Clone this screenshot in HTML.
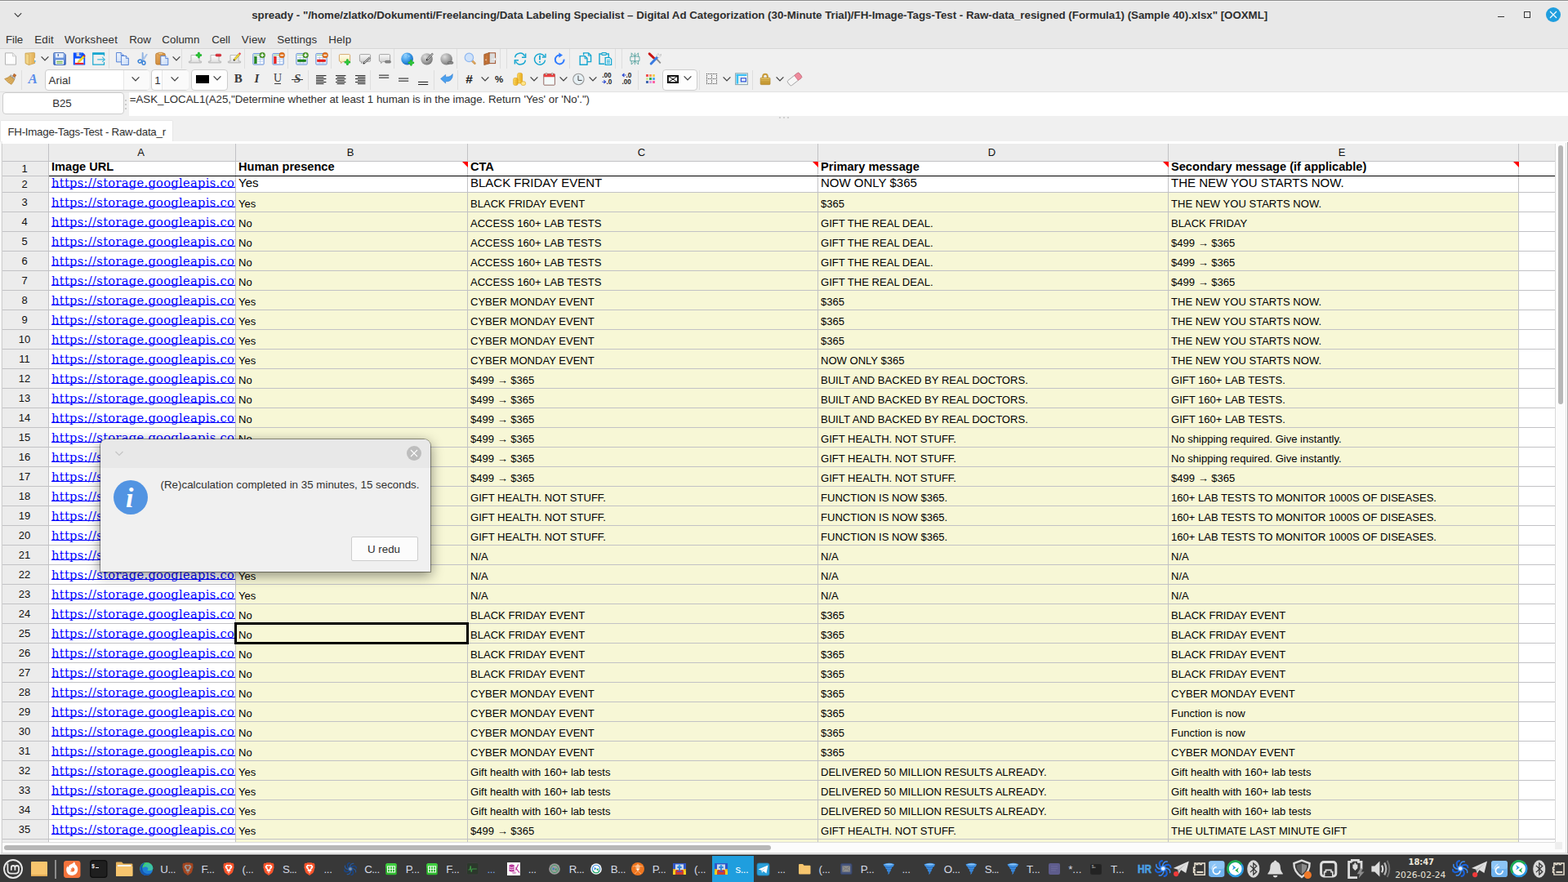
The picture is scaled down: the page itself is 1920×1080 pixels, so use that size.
<!DOCTYPE html>
<html><head><meta charset="utf-8"><title>spready</title>
<style>
html,body{margin:0;padding:0}
body{width:1920px;height:1080px;overflow:hidden;position:relative;background:#f0f0f0;font-family:'Liberation Sans',sans-serif}
div,span.t,svg{position:absolute}
span.t{white-space:pre;line-height:normal}
svg{overflow:visible}
span.l{position:absolute;left:63px;width:224.6px;overflow:hidden;white-space:pre;color:#0000ff;text-decoration:underline;font:14.67px 'DejaVu Serif','Liberation Serif',serif;letter-spacing:.3px;line-height:normal;text-decoration-thickness:1px;text-underline-offset:0px;text-decoration-skip-ink:none}
.dj{font-family:'DejaVu Sans','Liberation Sans',sans-serif !important}

</style></head><body>
<div style="left:0px;top:0px;width:1920px;height:60px;background:#e8e8e8;"></div>
<div style="left:0px;top:0px;width:1920px;height:1px;background:#8c8c8c;"></div>
<div style="left:0px;top:1px;width:1920px;height:1px;background:#f6f6f6;"></div>
<div style="left:0px;top:59px;width:1920px;height:1px;background:#d6d6d6;"></div>
<span class="t" style="left:308.2px;top:10.94px;font:700 13.33px 'Liberation Sans',sans-serif;color:#2f2f2f;letter-spacing:-0.027px;">spready - "/home/zlatko/Dokumenti/Freelancing/Data Labeling Specialist – Digital Ad Categorization (30-Minute Trial)/FH-Image-Tags-Test - Raw-data_resigned (Formula1) (Sample 40).xlsx" [OOXML]</span>
<svg style="left:10px;top:8px;" width="24" height="20" viewBox="0 0 24 20"><path d="M7.8 8.2 L12 12.4 L16.2 8.2" fill="none" stroke="#3c3c3c" stroke-width="1.15"/></svg>
<div style="left:1834px;top:20px;width:8px;height:1.3px;background:#333;"></div>
<div style="left:1866px;top:14px;width:8px;height:8px;box-sizing:border-box;border:1.2px solid #333;"></div>
<svg style="left:1893px;top:9px;" width="18" height="18" viewBox="0 0 18 18"><circle cx="9" cy="9" r="9" fill="#1f9ede"/><path d="M5 5 L13 13 M13 5 L5 13" stroke="#fff" stroke-width="1.1"/></svg>
<span class="t" style="left:7px;top:40.94px;font:400 13.33px 'Liberation Sans',sans-serif;color:#2f2f2f;letter-spacing:-0.094px;">File</span>
<span class="t" style="left:42.3px;top:40.94px;font:400 13.33px 'Liberation Sans',sans-serif;color:#2f2f2f;letter-spacing:0.168px;">Edit</span>
<span class="t" style="left:79px;top:40.94px;font:400 13.33px 'Liberation Sans',sans-serif;color:#2f2f2f;letter-spacing:0.177px;">Worksheet</span>
<span class="t" style="left:158.3px;top:40.94px;font:400 13.33px 'Liberation Sans',sans-serif;color:#2f2f2f;letter-spacing:-0.089px;">Row</span>
<span class="t" style="left:198.3px;top:40.94px;font:400 13.33px 'Liberation Sans',sans-serif;color:#2f2f2f;letter-spacing:0.039px;">Column</span>
<span class="t" style="left:259.3px;top:40.94px;font:400 13.33px 'Liberation Sans',sans-serif;color:#2f2f2f;letter-spacing:-0.117px;">Cell</span>
<span class="t" style="left:295.7px;top:40.94px;font:400 13.33px 'Liberation Sans',sans-serif;color:#2f2f2f;letter-spacing:0.297px;">View</span>
<span class="t" style="left:339.3px;top:40.94px;font:400 13.33px 'Liberation Sans',sans-serif;color:#2f2f2f;letter-spacing:0.119px;">Settings</span>
<span class="t" style="left:402.3px;top:40.94px;font:400 13.33px 'Liberation Sans',sans-serif;color:#2f2f2f;letter-spacing:0.129px;">Help</span>
<div style="left:0px;top:60px;width:1920px;height:53px;background:#f0f0f0;"></div>
<div style="left:0px;top:112px;width:1920px;height:1px;background:#e2e2e2;"></div>
<svg width="0" height="0" style="left:0;top:0"><defs>
<linearGradient id="gTan" x1="0" y1="0" x2="1" y2="0"><stop offset="0" stop-color="#f6dc9a"/><stop offset="1" stop-color="#e2ae52"/></linearGradient>
<linearGradient id="gBlueV" x1="0" y1="0" x2="0" y2="1"><stop offset="0" stop-color="#8fb2ec"/><stop offset="1" stop-color="#3f6fcb"/></linearGradient>
<linearGradient id="gPage" x1="0" y1="0" x2="1" y2="1"><stop offset="0" stop-color="#f4f8fe"/><stop offset="1" stop-color="#c3d8f6"/></linearGradient>
<linearGradient id="gKey" x1="0" y1="0" x2="0" y2="1"><stop offset="0" stop-color="#ffffff"/><stop offset="1" stop-color="#dcdcdc"/></linearGradient>
<linearGradient id="gClip" x1="0" y1="0" x2="1" y2="1"><stop offset="0" stop-color="#e9b066"/><stop offset="1" stop-color="#c67a25"/></linearGradient>
<radialGradient id="gGlobeB" cx=".35" cy=".3" r=".8"><stop offset="0" stop-color="#8fd0ff"/><stop offset=".6" stop-color="#2f8fe0"/><stop offset="1" stop-color="#1560b8"/></radialGradient>
<radialGradient id="gGlobeG" cx=".35" cy=".3" r=".8"><stop offset="0" stop-color="#dcdcdc"/><stop offset=".6" stop-color="#9c9c9c"/><stop offset="1" stop-color="#6e6e6e"/></radialGradient>
<linearGradient id="gBub" x1="0" y1="0" x2="0" y2="1"><stop offset="0" stop-color="#fffdf0"/><stop offset="1" stop-color="#f3e9a8"/></linearGradient>
<linearGradient id="gBubG" x1="0" y1="0" x2="0" y2="1"><stop offset="0" stop-color="#fafafa"/><stop offset="1" stop-color="#c8c8c8"/></linearGradient>
<linearGradient id="gGold" x1="0" y1="0" x2="1" y2="0"><stop offset="0" stop-color="#ffe36e"/><stop offset="1" stop-color="#e8a818"/></linearGradient>
<linearGradient id="gLock" x1="0" y1="0" x2="0" y2="1"><stop offset="0" stop-color="#f0cf70"/><stop offset="1" stop-color="#c7962c"/></linearGradient>
</defs></svg>
<svg style="left:5px;top:64px;" width="16" height="16" viewBox="0 0 16 16"><path d="M1.5 .9 H10.5 L14.5 4.9 V15.1 H1.5 Z" fill="#fdfdfd" stroke="#b4b4b4" stroke-width="1"/><path d="M10.5 .9 V4.9 H14.5" fill="#ececec" stroke="#c8c8c8" stroke-width=".8"/></svg>
<svg style="left:29px;top:64px;" width="16" height="16" viewBox="0 0 16 16"><path d="M2 1.2 L12.6 .4 Q13.6 .4 13.6 1.4 V13.4 L6.5 15.6 L2.2 13.6 Z" fill="url(#gTan)" stroke="#c49a45" stroke-width=".7"/><path d="M2.3 1.4 L6.6 2.6 V15.4 L2.3 13.5 Z" fill="#f2d588" stroke="#c9a04c" stroke-width=".6"/><rect x="13.2" y="7" width="1.3" height="4.6" fill="#fff"/><rect x="13.2" y="10" width="1.3" height="1.8" fill="#39a3e6"/></svg>
<svg style="left:48.5px;top:68px;" width="12" height="8" viewBox="0 0 12 8"><path d="M1.6 1.4 L6 5.9 L10.4 1.4" fill="none" stroke="#454545" stroke-width="1.35"/></svg>
<svg style="left:65px;top:64px;" width="16" height="16" viewBox="0 0 16 16"><path d="M1.6 .6 H13 L15.4 3 V14.6 Q15.4 15.4 14.6 15.4 H1.6 Q.7 15.4 .7 14.6 V1.5 Q.7 .6 1.6 .6Z" fill="url(#gBlueV)" stroke="#3c63b0" stroke-width=".9"/><rect x="3" y="1.2" width="9.6" height="5.4" fill="#e9f0fb"/><rect x="5.6" y="2" width="1.3" height="3" fill="#4a6fb5"/><rect x="3" y="9.4" width="10" height="5.4" fill="#fff"/><rect x="4.2" y="10.8" width="7.6" height="1.1" fill="#6fb04a"/><rect x="4.2" y="12.7" width="7.6" height="1.1" fill="#6fb04a"/></svg>
<svg style="left:88.5px;top:64px;" width="16" height="16" viewBox="0 0 16 16"><path d="M.8 .4 H12.6 L15.2 3 V15.6 H.8 Z" fill="#0a50ff"/><rect x="4.6" y=".4" width="5.6" height="4.6" fill="#cfcfcf"/><rect x="8.2" y=".4" width="1.6" height="3.6" fill="#0a50ff"/><rect x="2.8" y="7.6" width="10.6" height="7" fill="#fff"/><rect x="2.8" y="12.9" width="10.6" height="1.9" fill="#f0141e"/><path d="M6.2 12.6 L7 10.4 L12.8 4.2 L14.6 5.9 L8.6 12 Z" fill="#f7e11c" stroke="#c9a400" stroke-width=".5"/><path d="M12.8 4.2 L13.9 3 L15.6 4.6 L14.6 5.9 Z" fill="#e0202a"/><path d="M6.2 12.6 L7 10.4 L8.6 12 Z" fill="#d9b58a"/></svg>
<svg style="left:113px;top:64px;" width="16" height="16" viewBox="0 0 16 16"><path d="M14.5 4.4 V1 H.8 V15.1 H14.5 V12" fill="none" stroke="#18a6cf" stroke-width="1.2"/><rect x=".2" y=".4" width="14.9" height="2.6" fill="#18a6cf"/><path d="M6.2 8.9 H15 M12.2 5.9 L15.3 8.9 L12.2 11.9" fill="none" stroke="#3cb8dc" stroke-width="1.1"/></svg>
<div style="left:132.5px;top:60px;width:1px;height:24px;background:#dedede;"></div>
<svg style="left:141.5px;top:64px;" width="16" height="16" viewBox="0 0 16 16"><path d="M0.6 0.5 H6.199999999999999 L9.2 3.5 V11.9 H0.6 Z" fill="url(#gPage)" stroke="#4c7bd3" stroke-width=".9"/><path d="M6.199999999999999 0.5 V3.5 H9.2" fill="#eef4fd" stroke="#4c7bd3" stroke-width=".9"/><path d="M6.6 4.4 H12.4 L15.4 7.4 V15.5 H6.6 Z" fill="url(#gPage)" stroke="#4c7bd3" stroke-width=".9"/><path d="M12.4 4.4 V7.4 H15.4" fill="#eef4fd" stroke="#4c7bd3" stroke-width=".9"/></svg>
<svg style="left:165.5px;top:64px;" width="16" height="16" viewBox="0 0 16 16"><path d="M8.2 .4 L9.2 .6 L9.4 9 L8 10.4 Z" fill="#a9c5ea" stroke="#5b8fd6" stroke-width=".5"/><path d="M13.6 2 L14.3 2.8 L9.6 10 L8.6 8.6 Z" fill="#c4d7f1" stroke="#6c9ada" stroke-width=".5"/><ellipse cx="5.4" cy="11" rx="2.3" ry="1.9" fill="none" stroke="#3b83d8" stroke-width="1.5" transform="rotate(-25 5.4 11)"/><ellipse cx="10" cy="13" rx="1.9" ry="2.3" fill="none" stroke="#3b83d8" stroke-width="1.5"/></svg>
<svg style="left:189.5px;top:64px;" width="16" height="16" viewBox="0 0 16 16"><rect x=".8" y="1.2" width="11.4" height="13.8" rx="1.6" fill="url(#gClip)" stroke="#b06c1e" stroke-width=".8"/><rect x="3.6" y=".3" width="5.8" height="2.6" rx=".8" fill="#f3c987" stroke="#b06c1e" stroke-width=".6"/><path d="M6.8 4.6 H12.8 L15.8 7.6 V15.6 H6.8 Z" fill="url(#gPage)" stroke="#4c7bd3" stroke-width=".9"/><path d="M12.8 4.6 V7.6 H15.8" fill="#eef4fd" stroke="#4c7bd3" stroke-width=".9"/></svg>
<svg style="left:209.5px;top:68px;" width="12" height="8" viewBox="0 0 12 8"><path d="M1.6 1.4 L6 5.9 L10.4 1.4" fill="none" stroke="#454545" stroke-width="1.35"/></svg>
<div style="left:222.0px;top:60px;width:1px;height:24px;background:#dedede;"></div>
<svg style="left:231px;top:64px;" width="16" height="16" viewBox="0 0 16 16"><path d="M3 3.6 H13 V11 H15.2 Q15.6 11 15.6 11.5 V12.4 Q15.6 12.9 15.1 12.9 H.9 Q.4 12.9 .4 12.4 V11.5 Q.4 11 .9 11 H3 Z" fill="url(#gKey)" stroke="#a8a8a8" stroke-width=".8"/><path d="M9.9 3.6 H14.9 M12.4 1.1 V6.1" stroke="#19a325" stroke-width="2.7" stroke-linecap="round"/><path d="M9.9 3.6 H14.9 M12.4 1.1 V6.1" stroke="#2fc83a" stroke-width="1.7" stroke-linecap="round"/></svg>
<svg style="left:255px;top:64px;" width="16" height="16" viewBox="0 0 16 16"><path d="M3 3.6 H13 V11 H15.2 Q15.6 11 15.6 11.5 V12.4 Q15.6 12.9 15.1 12.9 H.9 Q.4 12.9 .4 12.4 V11.5 Q.4 11 .9 11 H3 Z" fill="url(#gKey)" stroke="#a8a8a8" stroke-width=".8"/><rect x="9" y="2.2" width="6.8" height="2.8" rx="1.2" fill="#e0303a" stroke="#b8202a" stroke-width=".6"/></svg>
<svg style="left:279px;top:64px;" width="16" height="16" viewBox="0 0 16 16"><path d="M3 3.6 H13 V11 H15.2 Q15.6 11 15.6 11.5 V12.4 Q15.6 12.9 15.1 12.9 H.9 Q.4 12.9 .4 12.4 V11.5 Q.4 11 .9 11 H3 Z" fill="url(#gKey)" stroke="#a8a8a8" stroke-width=".8"/><path d="M7.6 9.6 L14 2.4" stroke="#9b8420" stroke-width="2.6"/><path d="M7.6 9.6 L14 2.4" stroke="#f4dc3c" stroke-width="1.7"/><path d="M14 2.4 L15.3 1.0" stroke="#e8404c" stroke-width="2.4"/><circle cx="7.6" cy="9.6" r=".9" fill="#111"/></svg>
<div style="left:299.0px;top:60px;width:1px;height:24px;background:#dedede;"></div>
<svg style="left:309px;top:64px;" width="16" height="16" viewBox="0 0 16 16"><rect x=".9" y="1.6" width="13.2" height="13.4" rx=".8" fill="#fdfeff" stroke="#5b8ad8" stroke-width="1"/><path d="M2 3.4 H13" stroke="#7cc47c" stroke-width=".9"/><path d="M6.5 6 H13.2 M6.5 8.6 H13.2 M6.5 11.2 H13.2 M9.6 5 V14" stroke="#a8c4ee" stroke-width=".8"/><rect x="2.6" y="5.2" width="2.6" height="8.6" fill="#1e8a1e" stroke="#126412" stroke-width=".5"/><circle cx="12.2" cy="3.6" r="3.4" fill="#4c9a2a" stroke="#3a7a20" stroke-width=".5"/><path d="M10.2 3.6 H14.2 M12.2 1.6 V5.6" stroke="#fff" stroke-width="1.4"/></svg>
<svg style="left:333px;top:64px;" width="16" height="16" viewBox="0 0 16 16"><rect x=".9" y="1.6" width="13.2" height="13.4" rx=".8" fill="#fdfeff" stroke="#5b8ad8" stroke-width="1"/><path d="M2 3.4 H13" stroke="#7cc47c" stroke-width=".9"/><path d="M6.5 6 H13.2 M6.5 8.6 H13.2 M6.5 11.2 H13.2 M9.6 5 V14" stroke="#a8c4ee" stroke-width=".8"/><rect x="2.6" y="5.2" width="2.6" height="8.6" fill="#f02020" stroke="#c01010" stroke-width=".5"/><circle cx="12.2" cy="3.6" r="3.4" fill="#e2701c" stroke="#b85610" stroke-width=".5"/><path d="M10.2 3.6 H14.2" stroke="#fff" stroke-width="1.4"/></svg>
<div style="left:351.5px;top:60px;width:1px;height:24px;background:#dedede;"></div>
<svg style="left:362px;top:64px;" width="16" height="16" viewBox="0 0 16 16"><rect x=".9" y="1.6" width="13.2" height="13.4" rx=".8" fill="#fdfeff" stroke="#5b8ad8" stroke-width="1"/><path d="M2 3.4 H13" stroke="#7cc47c" stroke-width=".9"/><path d="M2.4 6.4 H12.8 M2.4 13.2 H12.8 M5.4 5 V14 M9.4 5 V14" stroke="#a8c4ee" stroke-width=".8"/><rect x="2.6" y="9" width="10" height="2.7" fill="#1e8a1e" stroke="#126412" stroke-width=".5"/><circle cx="12.2" cy="3.6" r="3.4" fill="#4c9a2a" stroke="#3a7a20" stroke-width=".5"/><path d="M10.2 3.6 H14.2 M12.2 1.6 V5.6" stroke="#fff" stroke-width="1.4"/></svg>
<svg style="left:386px;top:64px;" width="16" height="16" viewBox="0 0 16 16"><rect x=".9" y="1.6" width="13.2" height="13.4" rx=".8" fill="#fdfeff" stroke="#5b8ad8" stroke-width="1"/><path d="M2 3.4 H13" stroke="#7cc47c" stroke-width=".9"/><path d="M2.4 6.4 H12.8 M2.4 13.2 H12.8 M5.4 5 V14 M9.4 5 V14" stroke="#a8c4ee" stroke-width=".8"/><rect x="2.6" y="9" width="10" height="2.7" fill="#f02020" stroke="#c01010" stroke-width=".5"/><circle cx="12.2" cy="3.6" r="3.4" fill="#e2701c" stroke="#b85610" stroke-width=".5"/><path d="M10.2 3.6 H14.2" stroke="#fff" stroke-width="1.4"/></svg>
<div style="left:405.0px;top:60px;width:1px;height:24px;background:#dedede;"></div>
<svg style="left:414px;top:64px;" width="16" height="16" viewBox="0 0 16 16"><path d="M2.6 2.6 H13.4 Q14.6 2.6 14.6 3.8 V10.2 Q14.6 11.4 13.4 11.4 H5.8 L3.6 13.6 V11.4 H2.6 Q1.4 11.4 1.4 10.2 V3.8 Q1.4 2.6 2.6 2.6Z" fill="url(#gBub)" stroke="#d0a060" stroke-width=".9"/><path d="M8.9 12.2 H13.9 M11.4 9.7 V14.7" stroke="#19a325" stroke-width="2.7" stroke-linecap="round"/><path d="M8.9 12.2 H13.9 M11.4 9.7 V14.7" stroke="#2fc83a" stroke-width="1.7" stroke-linecap="round"/></svg>
<svg style="left:438.5px;top:64px;" width="16" height="16" viewBox="0 0 16 16"><path d="M2.6 2.6 H13.4 Q14.6 2.6 14.6 3.8 V10.2 Q14.6 11.4 13.4 11.4 H5.8 L3.6 13.6 V11.4 H2.6 Q1.4 11.4 1.4 10.2 V3.8 Q1.4 2.6 2.6 2.6Z" fill="url(#gBubG)" stroke="#9a9a9a" stroke-width=".9"/><path d="M6.4 13.6 L14 6.4" stroke="#555" stroke-width="2.2"/><path d="M6.9 13.1 L14 6.4" stroke="#e4e4e4" stroke-width="1"/><circle cx="6.2" cy="13.8" r=".8" fill="#111"/></svg>
<svg style="left:462.5px;top:64px;" width="16" height="16" viewBox="0 0 16 16"><path d="M2.6 2.6 H13.4 Q14.6 2.6 14.6 3.8 V10.2 Q14.6 11.4 13.4 11.4 H5.8 L3.6 13.6 V11.4 H2.6 Q1.4 11.4 1.4 10.2 V3.8 Q1.4 2.6 2.6 2.6Z" fill="url(#gBubG)" stroke="#9a9a9a" stroke-width=".9"/><rect x="8.6" y="10.4" width="6.8" height="2.6" rx="1.1" fill="#8c8c8c" stroke="#5c5c5c" stroke-width=".7"/></svg>
<div style="left:482.0px;top:60px;width:1px;height:24px;background:#dedede;"></div>
<svg style="left:491px;top:64px;" width="16" height="16" viewBox="0 0 16 16"><circle cx="7.6" cy="8" r="7.4" fill="url(#gGlobeB)"/><path d="M4 3.4 Q6 2 7.6 3.2 M9.2 3.6 Q10.4 4.6 9.8 5.8" stroke="#b6e2ff" stroke-width=".9" fill="none"/><path d="M9.9 12.8 H14.9 M12.4 10.3 V15.3" stroke="#19a325" stroke-width="2.7" stroke-linecap="round"/><path d="M9.9 12.8 H14.9 M12.4 10.3 V15.3" stroke="#2fc83a" stroke-width="1.7" stroke-linecap="round"/></svg>
<svg style="left:515px;top:64px;" width="16" height="16" viewBox="0 0 16 16"><circle cx="7.6" cy="8.4" r="7.2" fill="url(#gGlobeG)"/><path d="M7.8 9.2 L15 1.6" stroke="#555" stroke-width="2.2"/><path d="M8.4 8.6 L15 1.6" stroke="#ececec" stroke-width="1"/><circle cx="7.6" cy="9.4" r=".8" fill="#111"/></svg>
<svg style="left:539px;top:64px;" width="16" height="16" viewBox="0 0 16 16"><circle cx="7.6" cy="8.4" r="7.2" fill="url(#gGlobeG)"/><rect x="9.4" y="11.6" width="6.4" height="2.6" rx="1.1" fill="#8c8c8c" stroke="#5c5c5c" stroke-width=".7"/></svg>
<div style="left:559.0px;top:60px;width:1px;height:24px;background:#dedede;"></div>
<svg style="left:568px;top:64px;" width="16" height="16" viewBox="0 0 16 16"><path d="M9.6 9.8 L13.4 13.6" stroke="#c98a3c" stroke-width="2.6" stroke-linecap="round"/><path d="M9.6 9.8 L13.2 13.4" stroke="#efc489" stroke-width="1" stroke-linecap="round"/><circle cx="6.4" cy="6.4" r="5.2" fill="#cfe2fa" stroke="#8fb8f0" stroke-width="1.2"/></svg>
<svg style="left:592px;top:64px;" width="16" height="16" viewBox="0 0 16 16"><rect x="6.6" y=".8" width="8" height="12.8" fill="#dcdcdc" stroke="#a0522d" stroke-width="1"/><path d="M.8 2.6 L7.2 .5 V13.8 L.8 15.6 Z" fill="#c8783c" stroke="#8f4a1c" stroke-width=".7"/><path d="M2.2 3.8 L5.6 2.8 V12.6 L2.2 13.6 Z" fill="none" stroke="#a85c28" stroke-width=".5"/><circle cx="3" cy="9.2" r=".7" fill="#fff"/><path d="M9.4 7.6 H13 V5.8 L15.8 8.4 L13 11 V9.2 H9.4 Z" fill="#f4f4f4" stroke="#c8c8c8" stroke-width=".4"/></svg>
<div style="left:611.5px;top:60px;width:1px;height:24px;background:#dedede;"></div>
<div style="left:620.0px;top:60px;width:1px;height:24px;background:#dedede;"></div>
<svg style="left:629px;top:64px;" width="16" height="16" viewBox="0 0 16 16"><path d="M1.6 6.4 A6.2 6.2 0 0 1 13.4 4.8 M14.4 9.6 A6.2 6.2 0 0 1 2.6 11.2" fill="none" stroke="#16a6d0" stroke-width="1.5"/><path d="M14.6 1.6 V6.2 H10" fill="none" stroke="#16a6d0" stroke-width="1.5"/><path d="M1.4 14.4 V9.8 H6" fill="none" stroke="#16a6d0" stroke-width="1.5"/></svg>
<svg style="left:653px;top:64px;" width="16" height="16" viewBox="0 0 16 16"><path d="M13.6 5 A6.6 6.6 0 1 0 14.6 9.6" fill="none" stroke="#16a6d0" stroke-width="1.4"/><path d="M15 1.8 V6 H10.8" fill="none" stroke="#16a6d0" stroke-width="1.4"/><path d="M8 3.8 V9.6" stroke="#16a6d0" stroke-width="1.8"/><rect x="7.1" y="11" width="1.8" height="1.7" fill="#16a6d0"/></svg>
<svg style="left:677px;top:64px;" width="16" height="16" viewBox="0 0 16 16"><path d="M8.4 3.6 A5.4 5.4 0 1 0 13.6 8.6" fill="none" stroke="#2f7bff" stroke-width="2"/><path d="M7.4 .4 L12 3.6 L7.4 6.8 Z" fill="#2f7bff"/></svg>
<div style="left:697.0px;top:60px;width:1px;height:24px;background:#dedede;"></div>
<svg style="left:709px;top:64px;" width="16" height="16" viewBox="0 0 16 16"><path d="M5.6 3.6 V.9 H11.6 L14.6 3.9 V11.6 H10" fill="none" stroke="#16a6d0" stroke-width="1.4"/><path d="M11.4 1 V4.2 H14.4" fill="none" stroke="#16a6d0" stroke-width="1"/><path d="M1.2 4.6 H7.2 L10 7.4 V15.2 H1.2 Z" fill="none" stroke="#16a6d0" stroke-width="1.4"/><path d="M7 4.8 V7.8 H9.8" fill="none" stroke="#16a6d0" stroke-width="1"/></svg>
<svg style="left:733px;top:64px;" width="16" height="16" viewBox="0 0 16 16"><path d="M7 14.2 H1 V2 H12.2 V6" fill="none" stroke="#16a6d0" stroke-width="1.4"/><rect x="3.8" y=".7" width="5.6" height="2.6" rx=".8" fill="#f0f0f0" stroke="#16a6d0" stroke-width="1.3"/><path d="M8.2 6.6 H13.6 L15.6 8.6 V15.4 H8.2 Z" fill="#fff" stroke="#16a6d0" stroke-width="1.3"/><path d="M9.8 9.6 H14 M9.8 11.4 H14 M9.8 13.2 H14" stroke="#16a6d0" stroke-width="1"/></svg>
<div style="left:753.0px;top:60px;width:1px;height:24px;background:#dedede;"></div>
<div style="left:761.0px;top:60px;width:1px;height:24px;background:#dedede;"></div>
<svg style="left:770px;top:64px;" width="16" height="16" viewBox="0 0 16 16"><path d="M7.4 .6 V15.2 M3.2 .8 L7.4 5 L11.6 .8 M3.2 15 L7.4 10.8 L11.6 15 M1.8 5.4 V10.6 M13 5.4 V10.6 M1.8 5.4 L7.4 5 L13 5.4 M1.8 10.6 L7.4 10.8 L13 10.6 M3.2 .8 V5.2 M11.6 .8 V5.2 M3.2 15 V10.8 M11.6 15 V10.8" fill="none" stroke="#4a9c98" stroke-width=".8"/></svg>
<svg style="left:794px;top:64px;" width="16" height="16" viewBox="0 0 16 16"><path d="M8.6 6.6 L14.8 13.4" stroke="#8c8c8c" stroke-width="1.8"/><path d="M1.2 1.8 L6.6 7" stroke="#c81414" stroke-width="3" stroke-linecap="round"/><path d="M3.2 14 L10.6 6.2" stroke="#3a7be0" stroke-width="3" stroke-linecap="round"/><path d="M10.4 5.6 Q9.6 2.6 12.2 1.4 L12.6 3.6 L14.4 3.8 L15.4 2 Q16.2 5 13.6 6 Q12 6.6 10.4 5.6Z" fill="#f4f4f4" stroke="#b4b4b4" stroke-width=".6"/></svg>
<svg style="left:5px;top:89px;" width="16" height="16" viewBox="0 0 16 16"><path d="M12.2 1.2 L14.8 3 L12.8 6.2 L10.2 4.6 Z" fill="#c8702c" stroke="#8f4a18" stroke-width=".5"/><path d="M8 2.6 L13.6 6.4 L12.6 8.2 L7 4.4 Z" fill="#ececec" stroke="#8a8a8a" stroke-width=".6"/><path d="M8.4 3.4 L9 6 M10.2 4.6 L10.6 7 M11.8 5.6 L12.2 8" stroke="#555" stroke-width=".5"/><path d="M7 4.2 L12.8 8.2 Q11.6 11.6 9 14.4 Q4.4 12.4 .6 7.6 Q4.2 6.6 7 4.2Z" fill="#e2b665" stroke="#a87a30" stroke-width=".6"/><path d="M2.4 8.2 L8 5.8 M4 10 L9.6 7 M6 11.8 L11 8 M7.8 13.2 L12 8.8" stroke="#b8863a" stroke-width=".6"/></svg>
<div style="left:25.5px;top:86px;width:1px;height:24px;background:#dedede;"></div>
<span class="t" style="left:34.6px;top:87.05px;font:italic 700 17px 'Liberation Serif',serif;color:#5b8dea;">A</span>
<div style="left:54.5px;top:84.5px;width:128px;height:26.5px;background:#fff;box-sizing:border-box;border:1px solid #cdcdcd;border-radius:4px;"></div>
<div style="left:150.5px;top:85.5px;width:31px;height:24.5px;background:#fafafa;border-left:1px solid #e6e6e6;border-radius:0 3px 3px 0;"></div>
<span class="t" style="left:59.4px;top:90.94px;font:400 13.33px 'Liberation Sans',sans-serif;color:#2f2f2f;letter-spacing:0.125px;">Arial</span>
<svg style="left:160px;top:92.5px;" width="12" height="8" viewBox="0 0 12 8"><path d="M1.6 1.4 L6 5.9 L10.4 1.4" fill="none" stroke="#454545" stroke-width="1.35"/></svg>
<div style="left:184.5px;top:84.5px;width:46px;height:26.5px;background:#fff;box-sizing:border-box;border:1px solid #cdcdcd;border-radius:4px;"></div>
<div style="left:198px;top:85.5px;width:31.5px;height:24.5px;background:#fafafa;border-left:1px solid #e6e6e6;border-radius:0 3px 3px 0;"></div>
<span class="t" style="left:189.3px;top:90.94px;font:400 13.33px 'Liberation Sans',sans-serif;color:#2f2f2f;letter-spacing:0.109px;">1</span>
<svg style="left:208px;top:92.5px;" width="12" height="8" viewBox="0 0 12 8"><path d="M1.6 1.4 L6 5.9 L10.4 1.4" fill="none" stroke="#454545" stroke-width="1.35"/></svg>
<div style="left:233.5px;top:84.5px;width:45px;height:26.5px;background:#fdfdfd;box-sizing:border-box;border:1px solid #cdcdcd;border-radius:4px;"></div>
<div style="left:240px;top:92px;width:16px;height:10px;background:#000;"></div>
<svg style="left:260px;top:91.5px;" width="12" height="8" viewBox="0 0 12 8"><path d="M1.6 1.4 L6 5.9 L10.4 1.4" fill="none" stroke="#454545" stroke-width="1.35"/></svg>
<span class="t" style="left:286.8px;top:88.23px;font:700 15px 'Liberation Serif',serif;color:#3a3a3a;">B</span>
<span class="t" style="left:311.6px;top:88.23px;font:italic 700 15px 'Liberation Serif',serif;color:#3a3a3a;">I</span>
<span class="t" style="left:335px;top:88.13px;font:400 14px 'Liberation Serif',serif;color:#3a3a3a;">U</span>
<div style="left:335.5px;top:102px;width:8.5px;height:1.1px;background:#3a3a3a;"></div>
<span class="t" style="left:360px;top:88.23px;font:italic 700 15px 'Liberation Serif',serif;color:#4a4a4a;">S</span>
<div style="left:357px;top:96.8px;width:13.6px;height:1px;background:#3a3a3a;"></div>
<div style="left:376.5px;top:86px;width:1px;height:24px;background:#dedede;"></div>
<svg style="left:386.7px;top:89px;" width="16" height="16" viewBox="0 0 16 16"><rect x="0" y="3" width="12.4" height="1.1" fill="#2a2a2a"/><rect x="0" y="5" width="9.4" height="1.1" fill="#2a2a2a"/><rect x="0" y="7" width="12.4" height="1.1" fill="#2a2a2a"/><rect x="0" y="9" width="9.4" height="1.1" fill="#2a2a2a"/><rect x="0" y="11" width="12.4" height="1.1" fill="#2a2a2a"/><rect x="0" y="13" width="9.4" height="1.1" fill="#2a2a2a"/></svg>
<svg style="left:410.7px;top:89px;" width="16" height="16" viewBox="0 0 16 16"><rect x="0" y="3" width="12.4" height="1.1" fill="#2a2a2a"/><rect x="1.6" y="5" width="9.200000000000001" height="1.1" fill="#2a2a2a"/><rect x="0" y="7" width="12.4" height="1.1" fill="#2a2a2a"/><rect x="1.6" y="9" width="9.200000000000001" height="1.1" fill="#2a2a2a"/><rect x="0" y="11" width="12.4" height="1.1" fill="#2a2a2a"/><rect x="1.6" y="13" width="9.200000000000001" height="1.1" fill="#2a2a2a"/></svg>
<svg style="left:434.7px;top:89px;" width="16" height="16" viewBox="0 0 16 16"><rect x="0" y="3" width="12.4" height="1.1" fill="#2a2a2a"/><rect x="3" y="5" width="9.4" height="1.1" fill="#2a2a2a"/><rect x="0" y="7" width="12.4" height="1.1" fill="#2a2a2a"/><rect x="3" y="9" width="9.4" height="1.1" fill="#2a2a2a"/><rect x="0" y="11" width="12.4" height="1.1" fill="#2a2a2a"/><rect x="3" y="13" width="9.4" height="1.1" fill="#2a2a2a"/></svg>
<div style="left:453.4px;top:86px;width:1px;height:24px;background:#dedede;"></div>
<svg style="left:464px;top:89px;" width="16" height="16" viewBox="0 0 16 16"><rect x="0" y="2.6" width="12.2" height="1.1" fill="#2a2a2a"/><rect x="0" y="5.6" width="12.2" height="1.1" fill="#2a2a2a"/></svg>
<svg style="left:487.8px;top:89px;" width="16" height="16" viewBox="0 0 16 16"><rect x="0" y="6.5" width="12.2" height="1.1" fill="#2a2a2a"/><rect x="0" y="9.6" width="12.2" height="1.1" fill="#2a2a2a"/></svg>
<svg style="left:511.7px;top:89px;" width="16" height="16" viewBox="0 0 16 16"><rect x="0" y="10.9" width="12.2" height="1.1" fill="#2a2a2a"/><rect x="0" y="13.9" width="12.2" height="1.1" fill="#2a2a2a"/></svg>
<div style="left:530.5px;top:86px;width:1px;height:24px;background:#dedede;"></div>
<svg style="left:538.5px;top:89px;" width="16" height="16" viewBox="0 0 16 16"><path d="M.6 7.4 L6.6 2.4 V5.2 Q11.6 5.6 13.4 3.6 Q14.6 2.4 15.2 1.6 Q15.8 6.6 12.4 9.4 Q10 11.2 6.6 10.6 V13 Z" fill="#4aa0ee" stroke="#2a78d0" stroke-width=".6"/></svg>
<div style="left:559.5px;top:86px;width:1px;height:24px;background:#dedede;"></div>
<span class="t" style="left:570px;top:88.17px;font:italic 700 15.5px 'Liberation Sans',sans-serif;color:#222;">#</span>
<svg style="left:587.5px;top:93px;" width="12" height="8" viewBox="0 0 12 8"><path d="M1.6 1.4 L6 5.9 L10.4 1.4" fill="none" stroke="#454545" stroke-width="1.35"/></svg>
<span class="t" style="left:606px;top:90.99px;font:700 11.5px 'Liberation Sans',sans-serif;color:#222;">%</span>
<svg style="left:628px;top:89px;" width="16" height="16" viewBox="0 0 16 16"><rect x="5.6" y=".4" width="6" height="12.6" rx="2" fill="url(#gGold)" stroke="#d89a10" stroke-width=".6"/><path d="M6.4 3 H10.8 M6.4 5 H10.8 M6.4 7 H10.8 M6.4 9 H10.8" stroke="#e8b030" stroke-width=".6"/><rect x=".6" y="6.4" width="5.6" height="9" rx="2" fill="url(#gGold)" stroke="#d89a10" stroke-width=".6"/><path d="M1.4 9.4 H5.4 M1.4 11.4 H5.4 M1.4 13.2 H5.4" stroke="#e8b030" stroke-width=".6"/><rect x="10" y="10.8" width="5.6" height="4.6" rx="2" fill="#ffe68a" stroke="#d89a10" stroke-width=".6"/></svg>
<svg style="left:647.5px;top:93px;" width="12" height="8" viewBox="0 0 12 8"><path d="M1.6 1.4 L6 5.9 L10.4 1.4" fill="none" stroke="#454545" stroke-width="1.35"/></svg>
<svg style="left:664.5px;top:89px;" width="16" height="16" viewBox="0 0 16 16"><rect x=".8" y="1.4" width="13.6" height="13.8" rx=".8" fill="#f4fafa" stroke="#8a5a52" stroke-width=".9"/><path d="M.8 2.2 Q.8 1.4 1.6 1.4 H13.6 Q14.4 1.4 14.4 2.2 V5.2 H.8 Z" fill="#ea3e3e"/><rect x="3.2" y=".3" width="1.6" height="2.8" rx=".6" fill="#f4f4f4" stroke="#8a5a52" stroke-width=".5"/><rect x="10.4" y=".3" width="1.6" height="2.8" rx=".6" fill="#f4f4f4" stroke="#8a5a52" stroke-width=".5"/></svg>
<svg style="left:683.5px;top:93px;" width="12" height="8" viewBox="0 0 12 8"><path d="M1.6 1.4 L6 5.9 L10.4 1.4" fill="none" stroke="#454545" stroke-width="1.35"/></svg>
<svg style="left:700.5px;top:89px;" width="16" height="16" viewBox="0 0 16 16"><circle cx="7.4" cy="8" r="6.7" fill="#e6f0f4" stroke="#9a9a9a" stroke-width="1.1"/><path d="M7 3.6 V9.4 H11.6" fill="none" stroke="#444" stroke-width="1"/></svg>
<svg style="left:719.5px;top:93px;" width="12" height="8" viewBox="0 0 12 8"><path d="M1.6 1.4 L6 5.9 L10.4 1.4" fill="none" stroke="#454545" stroke-width="1.35"/></svg>
<span class="t" style="left:737.2px;top:88.28px;font:700 8.2px 'Liberation Sans',sans-serif;color:#1e1e1e;">.00</span>
<span class="t" style="left:742.4px;top:96.38px;font:700 8.2px 'Liberation Sans',sans-serif;color:#1e1e1e;">.0</span>
<svg style="left:737px;top:97px;" width="6" height="6" viewBox="0 0 6 6"><path d="M.4 3.2 H4 M2.4 1.2 L4.6 3.2 L2.4 5.2" fill="none" stroke="#2a48d0" stroke-width="1.1"/></svg>
<span class="t" style="left:766.4px;top:88.28px;font:700 8.2px 'Liberation Sans',sans-serif;color:#1e1e1e;">.0</span>
<span class="t" style="left:761.4px;top:96.38px;font:700 8.2px 'Liberation Sans',sans-serif;color:#1e1e1e;">.00</span>
<svg style="left:761px;top:89.4px;" width="6" height="6" viewBox="0 0 6 6"><path d="M2 3 H5.6 M3.4 1 L1.2 3 L3.4 5" fill="none" stroke="#2a48d0" stroke-width="1.1"/></svg>
<div style="left:780.5px;top:86px;width:1px;height:24px;background:#dedede;"></div>
<svg style="left:791px;top:91px;" width="12" height="12" viewBox="0 0 12 12"><rect x="0" y="0" width="3" height="3" fill="#f05252"/><rect x="4" y="0" width="3" height="3" fill="#ff9a56"/><rect x="8" y="0" width="3" height="3" fill="#f2d256"/><rect x="0" y="4" width="3" height="3" fill="#d2e8a4"/><rect x="4" y="4" width="3" height="3" fill="#34b052"/><rect x="8" y="4" width="3" height="3" fill="#54aaf2"/><rect x="0" y="8" width="3" height="3" fill="#4068ae"/><rect x="4" y="8" width="3" height="3" fill="#d89ae2"/><rect x="8" y="8" width="3" height="3" fill="#ff64a4"/></svg>
<div style="left:810.5px;top:84.5px;width:43px;height:26.5px;background:#fdfdfd;box-sizing:border-box;border:1px solid #cdcdcd;border-radius:4px;"></div>
<svg style="left:817px;top:92px;" width="14" height="10" viewBox="0 0 14 10"><rect x=".9" y=".9" width="12.2" height="8.2" fill="#fff" stroke="#000" stroke-width="1.8"/><path d="M1 1 L7 5 L13 1 M1 9 L7 5 L13 9" fill="none" stroke="#000" stroke-width="1"/></svg>
<svg style="left:835.5px;top:91.5px;" width="12" height="8" viewBox="0 0 12 8"><path d="M1.6 1.4 L6 5.9 L10.4 1.4" fill="none" stroke="#454545" stroke-width="1.35"/></svg>
<div style="left:855.5px;top:86px;width:1px;height:24px;background:#dedede;"></div>
<svg style="left:865px;top:90px;" width="13" height="13" viewBox="0 0 13 13"><path d="M0 .5 H13 M0 6.5 H13 M0 12.5 H13 M.5 0 V13 M6.5 0 V13 M12.5 0 V13" fill="none" stroke="#3a3a3a" stroke-width="1" stroke-dasharray="1 1" shape-rendering="crispEdges"/></svg>
<svg style="left:883.5px;top:92.5px;" width="12" height="8" viewBox="0 0 12 8"><path d="M1.6 1.4 L6 5.9 L10.4 1.4" fill="none" stroke="#454545" stroke-width="1.35"/></svg>
<svg style="left:900px;top:89px;" width="16" height="16" viewBox="0 0 16 16"><rect x=".6" y=".8" width="14.8" height="13.8" fill="#eef6f6" stroke="#8aa4ac" stroke-width="1"/><rect x="1.6" y="1.8" width="12.8" height="2.2" fill="#3cc0f4"/><rect x="1.6" y="1.8" width="2.6" height="11.8" fill="#3cc0f4"/><path d="M4.6 6.4 H14 M4.6 9 H14 M4.6 11.6 H14 M8 4.2 V13.4 M11.2 4.2 V13.4" stroke="#bcd8e0" stroke-width=".6"/><rect x="7.4" y="6.8" width="6" height="4" fill="#e8f4fa" stroke="#2848d8" stroke-width="1.1"/></svg>
<div style="left:920.5px;top:86px;width:1px;height:24px;background:#dedede;"></div>
<svg style="left:929px;top:89px;" width="16" height="16" viewBox="0 0 16 16"><path d="M5.2 6.6 V4.6 Q5.2 1.8 8 1.8 Q10.8 1.8 10.8 4.6 V6.6" fill="none" stroke="#c79a38" stroke-width="2"/><rect x="2.2" y="6.2" width="11.8" height="8.4" rx="1" fill="url(#gLock)" stroke="#a87c20" stroke-width=".7"/><path d="M2.8 8.4 H13.4 M2.8 10.4 H13.4 M2.8 12.4 H13.4" stroke="#a87c20" stroke-width=".6"/></svg>
<svg style="left:948.5px;top:92.5px;" width="12" height="8" viewBox="0 0 12 8"><path d="M1.6 1.4 L6 5.9 L10.4 1.4" fill="none" stroke="#454545" stroke-width="1.35"/></svg>
<svg style="left:965px;top:89px;" width="16" height="16" viewBox="0 0 16 16"><g transform="rotate(-38 8 8)"><rect x="-1" y="4.2" width="18" height="7.6" rx="1.8" fill="#f6f6f6" stroke="#a4a4a4" stroke-width=".9"/><path d="M10.6 4.2 H15.2 Q17 4.2 17 6 V10 Q17 11.8 15.2 11.8 H10.6 Z" fill="#ee8a9c" stroke="#d06a7c" stroke-width=".7"/></g></svg>
<div style="left:2.5px;top:112.5px;width:149px;height:27.2px;background:#fff;box-sizing:border-box;border:1px solid #cdcdcd;border-radius:4px;"></div>
<span class="t" style="left:64.2px;top:118.94px;font:400 13.33px 'Liberation Sans',sans-serif;color:#2f2f2f;letter-spacing:-0.073px;">B25</span>
<div style="left:158px;top:113px;width:1762px;height:29px;background:#fff;"></div>
<div style="left:153.3px;top:122px;width:1.7px;height:1.7px;background:#cacaca;"></div>
<div style="left:153.3px;top:127px;width:1.7px;height:1.7px;background:#cacaca;"></div>
<div style="left:153.3px;top:132px;width:1.7px;height:1.7px;background:#cacaca;"></div>
<span class="t" style="left:158.7px;top:113.94px;font:400 13.33px 'Liberation Sans',sans-serif;color:#2f2f2f;letter-spacing:-0.032px;">=ASK_LOCAL1(A25,"Determine whether at least 1 human is in the image. Return 'Yes' or 'No'.")</span>
<div style="left:954px;top:143.3px;width:2px;height:2px;background:#d0d0d0;"></div>
<div style="left:959px;top:143.3px;width:2px;height:2px;background:#d0d0d0;"></div>
<div style="left:964px;top:143.3px;width:2px;height:2px;background:#d0d0d0;"></div>
<div style="left:1px;top:148px;width:210px;height:26px;background:#fff;box-shadow:0 0 1px #bbb;"></div>
<span class="t" style="left:9.4px;top:153.94px;font:400 13.33px 'Liberation Sans',sans-serif;color:#2f2f2f;letter-spacing:-0.258px;">FH-Image-Tags-Test - Raw-data_r</span>
<div style="left:0px;top:173px;width:1920px;height:874px;background:#fff;"></div>
<div style="left:0px;top:173px;width:3px;height:874px;background:#f0f0f0;"></div>
<div style="left:2px;top:176px;width:1px;height:870px;background:#d0d0d0;"></div>
<div style="left:3px;top:176px;width:1901px;height:21px;background:#ececec;"></div>
<div style="left:3px;top:176px;width:56px;height:855px;background:#ececec;"></div>
<div style="left:289px;top:236px;width:1570px;height:795px;background:#f7f7d6;"></div>
<div style="left:59px;top:176px;width:1px;height:855px;background:#c2c2c5;"></div>
<div style="left:288px;top:176px;width:1px;height:855px;background:#c2c2c5;"></div>
<div style="left:572px;top:176px;width:1px;height:855px;background:#c2c2c5;"></div>
<div style="left:1001px;top:176px;width:1px;height:855px;background:#c2c2c5;"></div>
<div style="left:1430px;top:176px;width:1px;height:855px;background:#c2c2c5;"></div>
<div style="left:1859px;top:176px;width:1px;height:855px;background:#c2c2c5;"></div>
<div style="left:1904px;top:176px;width:1px;height:855px;background:#dadada;"></div>
<div style="left:3px;top:1031px;width:1902px;height:1px;background:#dedede;"></div>
<div style="left:3px;top:197px;width:1901px;height:1px;background:#c2c2c5;"></div>
<div style="left:3px;top:235px;width:1901px;height:1px;background:#c2c2c5;"></div>
<div style="left:3px;top:259px;width:1901px;height:1px;background:#c2c2c5;"></div>
<div style="left:3px;top:283px;width:1901px;height:1px;background:#c2c2c5;"></div>
<div style="left:3px;top:307px;width:1901px;height:1px;background:#c2c2c5;"></div>
<div style="left:3px;top:331px;width:1901px;height:1px;background:#c2c2c5;"></div>
<div style="left:3px;top:355px;width:1901px;height:1px;background:#c2c2c5;"></div>
<div style="left:3px;top:379px;width:1901px;height:1px;background:#c2c2c5;"></div>
<div style="left:3px;top:403px;width:1901px;height:1px;background:#c2c2c5;"></div>
<div style="left:3px;top:427px;width:1901px;height:1px;background:#c2c2c5;"></div>
<div style="left:3px;top:451px;width:1901px;height:1px;background:#c2c2c5;"></div>
<div style="left:3px;top:475px;width:1901px;height:1px;background:#c2c2c5;"></div>
<div style="left:3px;top:499px;width:1901px;height:1px;background:#c2c2c5;"></div>
<div style="left:3px;top:523px;width:1901px;height:1px;background:#c2c2c5;"></div>
<div style="left:3px;top:547px;width:1901px;height:1px;background:#c2c2c5;"></div>
<div style="left:3px;top:571px;width:1901px;height:1px;background:#c2c2c5;"></div>
<div style="left:3px;top:595px;width:1901px;height:1px;background:#c2c2c5;"></div>
<div style="left:3px;top:619px;width:1901px;height:1px;background:#c2c2c5;"></div>
<div style="left:3px;top:643px;width:1901px;height:1px;background:#c2c2c5;"></div>
<div style="left:3px;top:667px;width:1901px;height:1px;background:#c2c2c5;"></div>
<div style="left:3px;top:691px;width:1901px;height:1px;background:#c2c2c5;"></div>
<div style="left:3px;top:715px;width:1901px;height:1px;background:#c2c2c5;"></div>
<div style="left:3px;top:739px;width:1901px;height:1px;background:#c2c2c5;"></div>
<div style="left:3px;top:763px;width:1901px;height:1px;background:#c2c2c5;"></div>
<div style="left:3px;top:787px;width:1901px;height:1px;background:#c2c2c5;"></div>
<div style="left:3px;top:811px;width:1901px;height:1px;background:#c2c2c5;"></div>
<div style="left:3px;top:835px;width:1901px;height:1px;background:#c2c2c5;"></div>
<div style="left:3px;top:859px;width:1901px;height:1px;background:#c2c2c5;"></div>
<div style="left:3px;top:883px;width:1901px;height:1px;background:#c2c2c5;"></div>
<div style="left:3px;top:907px;width:1901px;height:1px;background:#c2c2c5;"></div>
<div style="left:3px;top:931px;width:1901px;height:1px;background:#c2c2c5;"></div>
<div style="left:3px;top:955px;width:1901px;height:1px;background:#c2c2c5;"></div>
<div style="left:3px;top:979px;width:1901px;height:1px;background:#c2c2c5;"></div>
<div style="left:3px;top:1003px;width:1901px;height:1px;background:#c2c2c5;"></div>
<div style="left:3px;top:1027px;width:1901px;height:1px;background:#c2c2c5;"></div>
<div style="left:3px;top:215px;width:56px;height:1px;background:#c2c2c5;"></div>
<div style="left:60px;top:215px;width:1844px;height:1px;background:#000;"></div>
<span class="t" style="left:152.5px;top:179.24px;font:400 13px 'Liberation Sans',sans-serif;color:#111;width:40px;text-align:center;">A</span>
<span class="t" style="left:409px;top:179.24px;font:400 13px 'Liberation Sans',sans-serif;color:#111;width:40px;text-align:center;">B</span>
<span class="t" style="left:765.5px;top:179.24px;font:400 13px 'Liberation Sans',sans-serif;color:#111;width:40px;text-align:center;">C</span>
<span class="t" style="left:1194.5px;top:179.24px;font:400 13px 'Liberation Sans',sans-serif;color:#111;width:40px;text-align:center;">D</span>
<span class="t" style="left:1623px;top:179.24px;font:400 13px 'Liberation Sans',sans-serif;color:#111;width:40px;text-align:center;">E</span>
<span class="t" style="left:10px;top:199.33px;font:400 13px 'Liberation Sans',sans-serif;color:#111;width:40px;text-align:center;">1</span>
<span class="t" style="left:10px;top:218.33px;font:400 13px 'Liberation Sans',sans-serif;color:#111;width:40px;text-align:center;">2</span>
<span class="t" style="left:10px;top:240.33px;font:400 13px 'Liberation Sans',sans-serif;color:#111;width:40px;text-align:center;">3</span>
<span class="t" style="left:10px;top:264.34px;font:400 13px 'Liberation Sans',sans-serif;color:#111;width:40px;text-align:center;">4</span>
<span class="t" style="left:10px;top:288.34px;font:400 13px 'Liberation Sans',sans-serif;color:#111;width:40px;text-align:center;">5</span>
<span class="t" style="left:10px;top:312.34px;font:400 13px 'Liberation Sans',sans-serif;color:#111;width:40px;text-align:center;">6</span>
<span class="t" style="left:10px;top:336.34px;font:400 13px 'Liberation Sans',sans-serif;color:#111;width:40px;text-align:center;">7</span>
<span class="t" style="left:10px;top:360.34px;font:400 13px 'Liberation Sans',sans-serif;color:#111;width:40px;text-align:center;">8</span>
<span class="t" style="left:10px;top:384.34px;font:400 13px 'Liberation Sans',sans-serif;color:#111;width:40px;text-align:center;">9</span>
<span class="t" style="left:10px;top:408.34px;font:400 13px 'Liberation Sans',sans-serif;color:#111;width:40px;text-align:center;">10</span>
<span class="t" style="left:10px;top:432.34px;font:400 13px 'Liberation Sans',sans-serif;color:#111;width:40px;text-align:center;">11</span>
<span class="t" style="left:10px;top:456.34px;font:400 13px 'Liberation Sans',sans-serif;color:#111;width:40px;text-align:center;">12</span>
<span class="t" style="left:10px;top:480.34px;font:400 13px 'Liberation Sans',sans-serif;color:#111;width:40px;text-align:center;">13</span>
<span class="t" style="left:10px;top:504.34px;font:400 13px 'Liberation Sans',sans-serif;color:#111;width:40px;text-align:center;">14</span>
<span class="t" style="left:10px;top:528.34px;font:400 13px 'Liberation Sans',sans-serif;color:#111;width:40px;text-align:center;">15</span>
<span class="t" style="left:10px;top:552.34px;font:400 13px 'Liberation Sans',sans-serif;color:#111;width:40px;text-align:center;">16</span>
<span class="t" style="left:10px;top:576.34px;font:400 13px 'Liberation Sans',sans-serif;color:#111;width:40px;text-align:center;">17</span>
<span class="t" style="left:10px;top:600.34px;font:400 13px 'Liberation Sans',sans-serif;color:#111;width:40px;text-align:center;">18</span>
<span class="t" style="left:10px;top:624.34px;font:400 13px 'Liberation Sans',sans-serif;color:#111;width:40px;text-align:center;">19</span>
<span class="t" style="left:10px;top:648.34px;font:400 13px 'Liberation Sans',sans-serif;color:#111;width:40px;text-align:center;">20</span>
<span class="t" style="left:10px;top:672.34px;font:400 13px 'Liberation Sans',sans-serif;color:#111;width:40px;text-align:center;">21</span>
<span class="t" style="left:10px;top:696.34px;font:400 13px 'Liberation Sans',sans-serif;color:#111;width:40px;text-align:center;">22</span>
<span class="t" style="left:10px;top:720.34px;font:400 13px 'Liberation Sans',sans-serif;color:#111;width:40px;text-align:center;">23</span>
<span class="t" style="left:10px;top:744.34px;font:400 13px 'Liberation Sans',sans-serif;color:#111;width:40px;text-align:center;">24</span>
<span class="t" style="left:10px;top:768.34px;font:400 13px 'Liberation Sans',sans-serif;color:#111;width:40px;text-align:center;">25</span>
<span class="t" style="left:10px;top:792.34px;font:400 13px 'Liberation Sans',sans-serif;color:#111;width:40px;text-align:center;">26</span>
<span class="t" style="left:10px;top:816.34px;font:400 13px 'Liberation Sans',sans-serif;color:#111;width:40px;text-align:center;">27</span>
<span class="t" style="left:10px;top:840.34px;font:400 13px 'Liberation Sans',sans-serif;color:#111;width:40px;text-align:center;">28</span>
<span class="t" style="left:10px;top:864.34px;font:400 13px 'Liberation Sans',sans-serif;color:#111;width:40px;text-align:center;">29</span>
<span class="t" style="left:10px;top:888.34px;font:400 13px 'Liberation Sans',sans-serif;color:#111;width:40px;text-align:center;">30</span>
<span class="t" style="left:10px;top:912.34px;font:400 13px 'Liberation Sans',sans-serif;color:#111;width:40px;text-align:center;">31</span>
<span class="t" style="left:10px;top:936.34px;font:400 13px 'Liberation Sans',sans-serif;color:#111;width:40px;text-align:center;">32</span>
<span class="t" style="left:10px;top:960.34px;font:400 13px 'Liberation Sans',sans-serif;color:#111;width:40px;text-align:center;">33</span>
<span class="t" style="left:10px;top:984.34px;font:400 13px 'Liberation Sans',sans-serif;color:#111;width:40px;text-align:center;">34</span>
<span class="t" style="left:10px;top:1008.34px;font:400 13px 'Liberation Sans',sans-serif;color:#111;width:40px;text-align:center;">35</span>
<span class="t" style="left:63px;top:195.79px;font:700 14.6px 'Liberation Sans',sans-serif;color:#000;">Image URL</span>
<span class="t" style="left:292px;top:195.79px;font:700 14.6px 'Liberation Sans',sans-serif;color:#000;">Human presence</span>
<span class="t" style="left:576px;top:195.79px;font:700 14.6px 'Liberation Sans',sans-serif;color:#000;">CTA</span>
<span class="t" style="left:1005px;top:195.79px;font:700 14.6px 'Liberation Sans',sans-serif;color:#000;">Primary message</span>
<span class="t" style="left:1434px;top:195.79px;font:700 14.6px 'Liberation Sans',sans-serif;color:#000;">Secondary message (if applicable)</span>
<svg style="left:566px;top:198px;" width="7" height="7" viewBox="0 0 7 7"><path d="M0 0 H7 V7 Z" fill="#f00"/></svg>
<svg style="left:995px;top:198px;" width="7" height="7" viewBox="0 0 7 7"><path d="M0 0 H7 V7 Z" fill="#f00"/></svg>
<svg style="left:1853px;top:198px;" width="7" height="7" viewBox="0 0 7 7"><path d="M0 0 H7 V7 Z" fill="#f00"/></svg>
<svg style="left:1424px;top:198px;" width="7" height="7" viewBox="0 0 7 7"><path d="M0 0 H7 V7 Z" fill="#f00"/></svg>
<span class="l" style="top:215.22px">https://storage.googleapis.com/</span>
<span class="t" style="left:292px;top:215.43px;font:400 15px 'Liberation Sans',sans-serif;color:#000;">Yes</span>
<span class="t" style="left:576px;top:215.43px;font:400 15px 'Liberation Sans',sans-serif;color:#000;">BLACK FRIDAY EVENT</span>
<span class="t" style="left:1005px;top:215.43px;font:400 15px 'Liberation Sans',sans-serif;color:#000;">NOW ONLY $365</span>
<span class="t" style="left:1434px;top:215.43px;font:400 15px 'Liberation Sans',sans-serif;color:#000;">THE NEW YOU STARTS NOW.</span>
<span class="l" style="top:239.22px">https://storage.googleapis.com/</span>
<span class="t" style="left:292px;top:242.19px;font:400 13.05px 'Liberation Sans',sans-serif;color:#000;">Yes</span>
<span class="t" style="left:576px;top:242.19px;font:400 13.05px 'Liberation Sans',sans-serif;color:#000;">BLACK FRIDAY EVENT</span>
<span class="t" style="left:1005px;top:242.19px;font:400 13.05px 'Liberation Sans',sans-serif;color:#000;">$365</span>
<span class="t" style="left:1434px;top:242.19px;font:400 13.05px 'Liberation Sans',sans-serif;color:#000;">THE NEW YOU STARTS NOW.</span>
<span class="l" style="top:263.22px">https://storage.googleapis.com/</span>
<span class="t" style="left:292px;top:266.19px;font:400 13.05px 'Liberation Sans',sans-serif;color:#000;">No</span>
<span class="t" style="left:576px;top:266.19px;font:400 13.05px 'Liberation Sans',sans-serif;color:#000;">ACCESS 160+ LAB TESTS</span>
<span class="t" style="left:1005px;top:266.19px;font:400 13.05px 'Liberation Sans',sans-serif;color:#000;">GIFT THE REAL DEAL.</span>
<span class="t" style="left:1434px;top:266.19px;font:400 13.05px 'Liberation Sans',sans-serif;color:#000;">BLACK FRIDAY</span>
<span class="l" style="top:287.22px">https://storage.googleapis.com/</span>
<span class="t" style="left:292px;top:290.19px;font:400 13.05px 'Liberation Sans',sans-serif;color:#000;">No</span>
<span class="t" style="left:576px;top:290.19px;font:400 13.05px 'Liberation Sans',sans-serif;color:#000;">ACCESS 160+ LAB TESTS</span>
<span class="t" style="left:1005px;top:290.19px;font:400 13.05px 'Liberation Sans',sans-serif;color:#000;">GIFT THE REAL DEAL.</span>
<span class="t" style="left:1434px;top:290.19px;font:400 13.05px 'Liberation Sans',sans-serif;color:#000;">$499 → $365</span>
<span class="l" style="top:311.22px">https://storage.googleapis.com/</span>
<span class="t" style="left:292px;top:314.19px;font:400 13.05px 'Liberation Sans',sans-serif;color:#000;">No</span>
<span class="t" style="left:576px;top:314.19px;font:400 13.05px 'Liberation Sans',sans-serif;color:#000;">ACCESS 160+ LAB TESTS</span>
<span class="t" style="left:1005px;top:314.19px;font:400 13.05px 'Liberation Sans',sans-serif;color:#000;">GIFT THE REAL DEAL.</span>
<span class="t" style="left:1434px;top:314.19px;font:400 13.05px 'Liberation Sans',sans-serif;color:#000;">$499 → $365</span>
<span class="l" style="top:335.22px">https://storage.googleapis.com/</span>
<span class="t" style="left:292px;top:338.19px;font:400 13.05px 'Liberation Sans',sans-serif;color:#000;">No</span>
<span class="t" style="left:576px;top:338.19px;font:400 13.05px 'Liberation Sans',sans-serif;color:#000;">ACCESS 160+ LAB TESTS</span>
<span class="t" style="left:1005px;top:338.19px;font:400 13.05px 'Liberation Sans',sans-serif;color:#000;">GIFT THE REAL DEAL.</span>
<span class="t" style="left:1434px;top:338.19px;font:400 13.05px 'Liberation Sans',sans-serif;color:#000;">$499 → $365</span>
<span class="l" style="top:359.22px">https://storage.googleapis.com/</span>
<span class="t" style="left:292px;top:362.19px;font:400 13.05px 'Liberation Sans',sans-serif;color:#000;">Yes</span>
<span class="t" style="left:576px;top:362.19px;font:400 13.05px 'Liberation Sans',sans-serif;color:#000;">CYBER MONDAY EVENT</span>
<span class="t" style="left:1005px;top:362.19px;font:400 13.05px 'Liberation Sans',sans-serif;color:#000;">$365</span>
<span class="t" style="left:1434px;top:362.19px;font:400 13.05px 'Liberation Sans',sans-serif;color:#000;">THE NEW YOU STARTS NOW.</span>
<span class="l" style="top:383.22px">https://storage.googleapis.com/</span>
<span class="t" style="left:292px;top:386.19px;font:400 13.05px 'Liberation Sans',sans-serif;color:#000;">Yes</span>
<span class="t" style="left:576px;top:386.19px;font:400 13.05px 'Liberation Sans',sans-serif;color:#000;">CYBER MONDAY EVENT</span>
<span class="t" style="left:1005px;top:386.19px;font:400 13.05px 'Liberation Sans',sans-serif;color:#000;">$365</span>
<span class="t" style="left:1434px;top:386.19px;font:400 13.05px 'Liberation Sans',sans-serif;color:#000;">THE NEW YOU STARTS NOW.</span>
<span class="l" style="top:407.22px">https://storage.googleapis.com/</span>
<span class="t" style="left:292px;top:410.19px;font:400 13.05px 'Liberation Sans',sans-serif;color:#000;">Yes</span>
<span class="t" style="left:576px;top:410.19px;font:400 13.05px 'Liberation Sans',sans-serif;color:#000;">CYBER MONDAY EVENT</span>
<span class="t" style="left:1005px;top:410.19px;font:400 13.05px 'Liberation Sans',sans-serif;color:#000;">$365</span>
<span class="t" style="left:1434px;top:410.19px;font:400 13.05px 'Liberation Sans',sans-serif;color:#000;">THE NEW YOU STARTS NOW.</span>
<span class="l" style="top:431.22px">https://storage.googleapis.com/</span>
<span class="t" style="left:292px;top:434.19px;font:400 13.05px 'Liberation Sans',sans-serif;color:#000;">Yes</span>
<span class="t" style="left:576px;top:434.19px;font:400 13.05px 'Liberation Sans',sans-serif;color:#000;">CYBER MONDAY EVENT</span>
<span class="t" style="left:1005px;top:434.19px;font:400 13.05px 'Liberation Sans',sans-serif;color:#000;">NOW ONLY $365</span>
<span class="t" style="left:1434px;top:434.19px;font:400 13.05px 'Liberation Sans',sans-serif;color:#000;">THE NEW YOU STARTS NOW.</span>
<span class="l" style="top:455.22px">https://storage.googleapis.com/</span>
<span class="t" style="left:292px;top:458.19px;font:400 13.05px 'Liberation Sans',sans-serif;color:#000;">No</span>
<span class="t" style="left:576px;top:458.19px;font:400 13.05px 'Liberation Sans',sans-serif;color:#000;">$499 → $365</span>
<span class="t" style="left:1005px;top:458.19px;font:400 13.05px 'Liberation Sans',sans-serif;color:#000;">BUILT AND BACKED BY REAL DOCTORS.</span>
<span class="t" style="left:1434px;top:458.19px;font:400 13.05px 'Liberation Sans',sans-serif;color:#000;">GIFT 160+ LAB TESTS.</span>
<span class="l" style="top:479.22px">https://storage.googleapis.com/</span>
<span class="t" style="left:292px;top:482.19px;font:400 13.05px 'Liberation Sans',sans-serif;color:#000;">No</span>
<span class="t" style="left:576px;top:482.19px;font:400 13.05px 'Liberation Sans',sans-serif;color:#000;">$499 → $365</span>
<span class="t" style="left:1005px;top:482.19px;font:400 13.05px 'Liberation Sans',sans-serif;color:#000;">BUILT AND BACKED BY REAL DOCTORS.</span>
<span class="t" style="left:1434px;top:482.19px;font:400 13.05px 'Liberation Sans',sans-serif;color:#000;">GIFT 160+ LAB TESTS.</span>
<span class="l" style="top:503.22px">https://storage.googleapis.com/</span>
<span class="t" style="left:292px;top:506.19px;font:400 13.05px 'Liberation Sans',sans-serif;color:#000;">No</span>
<span class="t" style="left:576px;top:506.19px;font:400 13.05px 'Liberation Sans',sans-serif;color:#000;">$499 → $365</span>
<span class="t" style="left:1005px;top:506.19px;font:400 13.05px 'Liberation Sans',sans-serif;color:#000;">BUILT AND BACKED BY REAL DOCTORS.</span>
<span class="t" style="left:1434px;top:506.19px;font:400 13.05px 'Liberation Sans',sans-serif;color:#000;">GIFT 160+ LAB TESTS.</span>
<span class="l" style="top:527.22px">https://storage.googleapis.com/</span>
<span class="t" style="left:292px;top:530.19px;font:400 13.05px 'Liberation Sans',sans-serif;color:#000;">No</span>
<span class="t" style="left:576px;top:530.19px;font:400 13.05px 'Liberation Sans',sans-serif;color:#000;">$499 → $365</span>
<span class="t" style="left:1005px;top:530.19px;font:400 13.05px 'Liberation Sans',sans-serif;color:#000;">GIFT HEALTH. NOT STUFF.</span>
<span class="t" style="left:1434px;top:530.19px;font:400 13.05px 'Liberation Sans',sans-serif;color:#000;">No shipping required. Give instantly.</span>
<span class="l" style="top:551.22px">https://storage.googleapis.com/</span>
<span class="t" style="left:292px;top:554.19px;font:400 13.05px 'Liberation Sans',sans-serif;color:#000;">No</span>
<span class="t" style="left:576px;top:554.19px;font:400 13.05px 'Liberation Sans',sans-serif;color:#000;">$499 → $365</span>
<span class="t" style="left:1005px;top:554.19px;font:400 13.05px 'Liberation Sans',sans-serif;color:#000;">GIFT HEALTH. NOT STUFF.</span>
<span class="t" style="left:1434px;top:554.19px;font:400 13.05px 'Liberation Sans',sans-serif;color:#000;">No shipping required. Give instantly.</span>
<span class="l" style="top:575.22px">https://storage.googleapis.com/</span>
<span class="t" style="left:292px;top:578.19px;font:400 13.05px 'Liberation Sans',sans-serif;color:#000;">No</span>
<span class="t" style="left:576px;top:578.19px;font:400 13.05px 'Liberation Sans',sans-serif;color:#000;">$499 → $365</span>
<span class="t" style="left:1005px;top:578.19px;font:400 13.05px 'Liberation Sans',sans-serif;color:#000;">GIFT HEALTH. NOT STUFF.</span>
<span class="t" style="left:1434px;top:578.19px;font:400 13.05px 'Liberation Sans',sans-serif;color:#000;">$499 → $365</span>
<span class="l" style="top:599.22px">https://storage.googleapis.com/</span>
<span class="t" style="left:292px;top:602.19px;font:400 13.05px 'Liberation Sans',sans-serif;color:#000;">No</span>
<span class="t" style="left:576px;top:602.19px;font:400 13.05px 'Liberation Sans',sans-serif;color:#000;">GIFT HEALTH. NOT STUFF.</span>
<span class="t" style="left:1005px;top:602.19px;font:400 13.05px 'Liberation Sans',sans-serif;color:#000;">FUNCTION IS NOW $365.</span>
<span class="t" style="left:1434px;top:602.19px;font:400 13.05px 'Liberation Sans',sans-serif;color:#000;">160+ LAB TESTS TO MONITOR 1000S OF DISEASES.</span>
<span class="l" style="top:623.22px">https://storage.googleapis.com/</span>
<span class="t" style="left:292px;top:626.19px;font:400 13.05px 'Liberation Sans',sans-serif;color:#000;">No</span>
<span class="t" style="left:576px;top:626.19px;font:400 13.05px 'Liberation Sans',sans-serif;color:#000;">GIFT HEALTH. NOT STUFF.</span>
<span class="t" style="left:1005px;top:626.19px;font:400 13.05px 'Liberation Sans',sans-serif;color:#000;">FUNCTION IS NOW $365.</span>
<span class="t" style="left:1434px;top:626.19px;font:400 13.05px 'Liberation Sans',sans-serif;color:#000;">160+ LAB TESTS TO MONITOR 1000S OF DISEASES.</span>
<span class="l" style="top:647.22px">https://storage.googleapis.com/</span>
<span class="t" style="left:292px;top:650.19px;font:400 13.05px 'Liberation Sans',sans-serif;color:#000;">No</span>
<span class="t" style="left:576px;top:650.19px;font:400 13.05px 'Liberation Sans',sans-serif;color:#000;">GIFT HEALTH. NOT STUFF.</span>
<span class="t" style="left:1005px;top:650.19px;font:400 13.05px 'Liberation Sans',sans-serif;color:#000;">FUNCTION IS NOW $365.</span>
<span class="t" style="left:1434px;top:650.19px;font:400 13.05px 'Liberation Sans',sans-serif;color:#000;">160+ LAB TESTS TO MONITOR 1000S OF DISEASES.</span>
<span class="l" style="top:671.22px">https://storage.googleapis.com/</span>
<span class="t" style="left:292px;top:674.19px;font:400 13.05px 'Liberation Sans',sans-serif;color:#000;">Yes</span>
<span class="t" style="left:576px;top:674.19px;font:400 13.05px 'Liberation Sans',sans-serif;color:#000;">N/A</span>
<span class="t" style="left:1005px;top:674.19px;font:400 13.05px 'Liberation Sans',sans-serif;color:#000;">N/A</span>
<span class="t" style="left:1434px;top:674.19px;font:400 13.05px 'Liberation Sans',sans-serif;color:#000;">N/A</span>
<span class="l" style="top:695.22px">https://storage.googleapis.com/</span>
<span class="t" style="left:292px;top:698.19px;font:400 13.05px 'Liberation Sans',sans-serif;color:#000;">Yes</span>
<span class="t" style="left:576px;top:698.19px;font:400 13.05px 'Liberation Sans',sans-serif;color:#000;">N/A</span>
<span class="t" style="left:1005px;top:698.19px;font:400 13.05px 'Liberation Sans',sans-serif;color:#000;">N/A</span>
<span class="t" style="left:1434px;top:698.19px;font:400 13.05px 'Liberation Sans',sans-serif;color:#000;">N/A</span>
<span class="l" style="top:719.22px">https://storage.googleapis.com/</span>
<span class="t" style="left:292px;top:722.19px;font:400 13.05px 'Liberation Sans',sans-serif;color:#000;">Yes</span>
<span class="t" style="left:576px;top:722.19px;font:400 13.05px 'Liberation Sans',sans-serif;color:#000;">N/A</span>
<span class="t" style="left:1005px;top:722.19px;font:400 13.05px 'Liberation Sans',sans-serif;color:#000;">N/A</span>
<span class="t" style="left:1434px;top:722.19px;font:400 13.05px 'Liberation Sans',sans-serif;color:#000;">N/A</span>
<span class="l" style="top:743.22px">https://storage.googleapis.com/</span>
<span class="t" style="left:292px;top:746.19px;font:400 13.05px 'Liberation Sans',sans-serif;color:#000;">No</span>
<span class="t" style="left:576px;top:746.19px;font:400 13.05px 'Liberation Sans',sans-serif;color:#000;">BLACK FRIDAY EVENT</span>
<span class="t" style="left:1005px;top:746.19px;font:400 13.05px 'Liberation Sans',sans-serif;color:#000;">$365</span>
<span class="t" style="left:1434px;top:746.19px;font:400 13.05px 'Liberation Sans',sans-serif;color:#000;">BLACK FRIDAY EVENT</span>
<span class="l" style="top:767.22px">https://storage.googleapis.com/</span>
<span class="t" style="left:292px;top:770.19px;font:400 13.05px 'Liberation Sans',sans-serif;color:#000;">No</span>
<span class="t" style="left:576px;top:770.19px;font:400 13.05px 'Liberation Sans',sans-serif;color:#000;">BLACK FRIDAY EVENT</span>
<span class="t" style="left:1005px;top:770.19px;font:400 13.05px 'Liberation Sans',sans-serif;color:#000;">$365</span>
<span class="t" style="left:1434px;top:770.19px;font:400 13.05px 'Liberation Sans',sans-serif;color:#000;">BLACK FRIDAY EVENT</span>
<span class="l" style="top:791.22px">https://storage.googleapis.com/</span>
<span class="t" style="left:292px;top:794.19px;font:400 13.05px 'Liberation Sans',sans-serif;color:#000;">No</span>
<span class="t" style="left:576px;top:794.19px;font:400 13.05px 'Liberation Sans',sans-serif;color:#000;">BLACK FRIDAY EVENT</span>
<span class="t" style="left:1005px;top:794.19px;font:400 13.05px 'Liberation Sans',sans-serif;color:#000;">$365</span>
<span class="t" style="left:1434px;top:794.19px;font:400 13.05px 'Liberation Sans',sans-serif;color:#000;">BLACK FRIDAY EVENT</span>
<span class="l" style="top:815.22px">https://storage.googleapis.com/</span>
<span class="t" style="left:292px;top:818.19px;font:400 13.05px 'Liberation Sans',sans-serif;color:#000;">No</span>
<span class="t" style="left:576px;top:818.19px;font:400 13.05px 'Liberation Sans',sans-serif;color:#000;">BLACK FRIDAY EVENT</span>
<span class="t" style="left:1005px;top:818.19px;font:400 13.05px 'Liberation Sans',sans-serif;color:#000;">$365</span>
<span class="t" style="left:1434px;top:818.19px;font:400 13.05px 'Liberation Sans',sans-serif;color:#000;">BLACK FRIDAY EVENT</span>
<span class="l" style="top:839.22px">https://storage.googleapis.com/</span>
<span class="t" style="left:292px;top:842.19px;font:400 13.05px 'Liberation Sans',sans-serif;color:#000;">No</span>
<span class="t" style="left:576px;top:842.19px;font:400 13.05px 'Liberation Sans',sans-serif;color:#000;">CYBER MONDAY EVENT</span>
<span class="t" style="left:1005px;top:842.19px;font:400 13.05px 'Liberation Sans',sans-serif;color:#000;">$365</span>
<span class="t" style="left:1434px;top:842.19px;font:400 13.05px 'Liberation Sans',sans-serif;color:#000;">CYBER MONDAY EVENT</span>
<span class="l" style="top:863.22px">https://storage.googleapis.com/</span>
<span class="t" style="left:292px;top:866.19px;font:400 13.05px 'Liberation Sans',sans-serif;color:#000;">No</span>
<span class="t" style="left:576px;top:866.19px;font:400 13.05px 'Liberation Sans',sans-serif;color:#000;">CYBER MONDAY EVENT</span>
<span class="t" style="left:1005px;top:866.19px;font:400 13.05px 'Liberation Sans',sans-serif;color:#000;">$365</span>
<span class="t" style="left:1434px;top:866.19px;font:400 13.05px 'Liberation Sans',sans-serif;color:#000;">Function is now</span>
<span class="l" style="top:887.22px">https://storage.googleapis.com/</span>
<span class="t" style="left:292px;top:890.19px;font:400 13.05px 'Liberation Sans',sans-serif;color:#000;">No</span>
<span class="t" style="left:576px;top:890.19px;font:400 13.05px 'Liberation Sans',sans-serif;color:#000;">CYBER MONDAY EVENT</span>
<span class="t" style="left:1005px;top:890.19px;font:400 13.05px 'Liberation Sans',sans-serif;color:#000;">$365</span>
<span class="t" style="left:1434px;top:890.19px;font:400 13.05px 'Liberation Sans',sans-serif;color:#000;">Function is now</span>
<span class="l" style="top:911.22px">https://storage.googleapis.com/</span>
<span class="t" style="left:292px;top:914.19px;font:400 13.05px 'Liberation Sans',sans-serif;color:#000;">No</span>
<span class="t" style="left:576px;top:914.19px;font:400 13.05px 'Liberation Sans',sans-serif;color:#000;">CYBER MONDAY EVENT</span>
<span class="t" style="left:1005px;top:914.19px;font:400 13.05px 'Liberation Sans',sans-serif;color:#000;">$365</span>
<span class="t" style="left:1434px;top:914.19px;font:400 13.05px 'Liberation Sans',sans-serif;color:#000;">CYBER MONDAY EVENT</span>
<span class="l" style="top:935.22px">https://storage.googleapis.com/</span>
<span class="t" style="left:292px;top:938.19px;font:400 13.05px 'Liberation Sans',sans-serif;color:#000;">Yes</span>
<span class="t" style="left:576px;top:938.19px;font:400 13.05px 'Liberation Sans',sans-serif;color:#000;">Gift health with 160+ lab tests</span>
<span class="t" style="left:1005px;top:938.19px;font:400 13.05px 'Liberation Sans',sans-serif;color:#000;">DELIVERED 50 MILLION RESULTS ALREADY.</span>
<span class="t" style="left:1434px;top:938.19px;font:400 13.05px 'Liberation Sans',sans-serif;color:#000;">Gift health with 160+ lab tests</span>
<span class="l" style="top:959.22px">https://storage.googleapis.com/</span>
<span class="t" style="left:292px;top:962.19px;font:400 13.05px 'Liberation Sans',sans-serif;color:#000;">Yes</span>
<span class="t" style="left:576px;top:962.19px;font:400 13.05px 'Liberation Sans',sans-serif;color:#000;">Gift health with 160+ lab tests</span>
<span class="t" style="left:1005px;top:962.19px;font:400 13.05px 'Liberation Sans',sans-serif;color:#000;">DELIVERED 50 MILLION RESULTS ALREADY.</span>
<span class="t" style="left:1434px;top:962.19px;font:400 13.05px 'Liberation Sans',sans-serif;color:#000;">Gift health with 160+ lab tests</span>
<span class="l" style="top:983.22px">https://storage.googleapis.com/</span>
<span class="t" style="left:292px;top:986.19px;font:400 13.05px 'Liberation Sans',sans-serif;color:#000;">Yes</span>
<span class="t" style="left:576px;top:986.19px;font:400 13.05px 'Liberation Sans',sans-serif;color:#000;">Gift health with 160+ lab tests</span>
<span class="t" style="left:1005px;top:986.19px;font:400 13.05px 'Liberation Sans',sans-serif;color:#000;">DELIVERED 50 MILLION RESULTS ALREADY.</span>
<span class="t" style="left:1434px;top:986.19px;font:400 13.05px 'Liberation Sans',sans-serif;color:#000;">Gift health with 160+ lab tests</span>
<span class="l" style="top:1007.22px">https://storage.googleapis.com/</span>
<span class="t" style="left:292px;top:1010.19px;font:400 13.05px 'Liberation Sans',sans-serif;color:#000;">Yes</span>
<span class="t" style="left:576px;top:1010.19px;font:400 13.05px 'Liberation Sans',sans-serif;color:#000;">$499 → $365</span>
<span class="t" style="left:1005px;top:1010.19px;font:400 13.05px 'Liberation Sans',sans-serif;color:#000;">GIFT HEALTH. NOT STUFF.</span>
<span class="t" style="left:1434px;top:1010.19px;font:400 13.05px 'Liberation Sans',sans-serif;color:#000;">THE ULTIMATE LAST MINUTE GIFT</span>
<div style="left:287px;top:762px;width:287px;height:27px;box-sizing:border-box;border:3px solid #000;"></div>
<div style="left:1905px;top:173px;width:12px;height:872px;background:#fcfcfc;"></div>
<div style="left:1908px;top:178px;width:6px;height:317px;background:#b7b7b7;border-radius:3px;"></div>
<div style="left:3px;top:1032px;width:1914px;height:12.5px;background:#fcfcfc;"></div>
<div style="left:5px;top:1035px;width:939px;height:6px;background:#b7b7b7;border-radius:3px;"></div>
<div style="left:1904px;top:1031px;width:9px;height:9px;background:#eeeeee;"></div>
<div style="left:0px;top:1044.3px;width:1920px;height:1px;background:#dcdcdc;"></div>
<div style="left:0px;top:1045.2px;width:1920px;height:1.8px;background:#e8e8e8;"></div>
<div style="left:1917px;top:175px;width:1px;height:870px;background:#e2e2e2;"></div>
<div style="left:1918.5px;top:174px;width:1.5px;height:871px;background:#a8a8a8;"></div>
<div style="left:0px;top:174px;width:1.2px;height:872px;background:#fafafa;"></div>
<div style="left:123px;top:538px;width:403.5px;height:162px;background:#f0f0f0;border-radius:8px 8px 0 0;box-shadow:0 4px 15px 1px rgba(0,0,0,.42),0 0 0 1px rgba(0,0,0,.38);overflow:hidden;"></div>
<div style="left:123px;top:538px;width:403.5px;height:35px;background:#e8e8e8;border-radius:8px 8px 0 0;"></div>
<svg style="left:138px;top:548px;" width="16" height="14" viewBox="0 0 16 14"><path d="M3.5 5 L8 9.5 L12.5 5" fill="none" stroke="#c4c4c4" stroke-width="1.2"/></svg>
<svg style="left:498px;top:546px;" width="18" height="18" viewBox="0 0 18 18"><circle cx="9" cy="9" r="9" fill="#bdbdbd"/><path d="M5 5 L13 13 M13 5 L5 13" stroke="#fff" stroke-width="1.1"/></svg>
<svg style="left:139px;top:588px;" width="42" height="42" viewBox="0 0 42 42"><circle cx="21" cy="21" r="21" fill="#5294e2"/></svg>
<span class="t" style="left:154px;top:590.71px;font:italic 700 34px 'Liberation Serif',serif;color:#fff;">i</span>
<span class="t" style="left:196.5px;top:585.94px;font:400 13.33px 'Liberation Sans',sans-serif;color:#2f2f2f;letter-spacing:0.013px;">(Re)calculation completed in 35 minutes, 15 seconds.</span>
<div style="left:429.5px;top:657.1px;width:82px;height:29.5px;background:#fcfcfc;box-sizing:border-box;border:1px solid #cdcdcd;border-radius:2px;"></div>
<span class="t" style="left:450px;top:664.94px;font:400 13.33px 'Liberation Sans',sans-serif;color:#2f2f2f;letter-spacing:-0.008px;">U redu</span>
<div style="left:0px;top:1047px;width:1920px;height:33px;background:#383838;"></div>
<div style="left:0px;top:1046px;width:1920px;height:1px;background:#8e8e8e;"></div>
<div style="left:0px;top:1047px;width:1920px;height:1px;background:#242424;"></div>
<svg width="0" height="0" style="left:0;top:0"><defs>
<symbol id="brave" viewBox="0 0 14 16"><path d="M3.2 .9 L4.6 .2 H9.4 L10.8 .9 L12.4 .8 L13.6 3 L13.2 4.4 L13.7 5.8 L12.2 11.2 Q11.6 12.8 10.2 13.8 L7 16 L3.8 13.8 Q2.4 12.8 1.8 11.2 L.3 5.8 L.8 4.4 L.4 3 L1.6 .8 Z" fill="var(--c,#fb542b)"/><path d="M7 3.2 L9.4 2.8 L11.4 5 L10.6 7.2 L9 8.6 L9.6 10 L7 11.8 L4.4 10 L5 8.6 L3.4 7.2 L2.6 5 L4.6 2.8 Z" fill="var(--f,#fff)"/><path d="M7 4.6 L8.6 4.4 L9.6 5.6 L8.2 6.4 L8.4 8 L7 8.8 L5.6 8 L5.8 6.4 L4.4 5.6 L5.4 4.4 Z" fill="var(--c,#fb542b)"/><path d="M7 12.4 L8.6 11.4 L7 13.6 L5.4 11.4 Z" fill="var(--f,#fff)"/></symbol>
<symbol id="torn" viewBox="0 0 15 16"><path d="M.6 2.4 Q7.5 -.8 14.6 2.2 Q14 5 11.4 6.2 Q11.8 8 10 9 Q10.6 11 8.6 12 Q9 14 6.4 15.6 Q7.4 13.4 6.2 12 Q4.6 10.6 5.4 9 Q3 8 3.4 6.2 Q.8 5 .6 2.4Z" fill="#3f8fe0"/><path d="M1.4 2.6 Q7.5 .6 13.8 2.6 Q7.5 4.6 1.4 2.6Z" fill="#8cc4f4"/><path d="M3.6 6 Q7.5 7.4 11.2 6 M5.4 9 Q7.6 10 10 9 M6.2 12 Q7.4 12.6 8.6 12" stroke="#1c5cb0" stroke-width=".8" fill="none"/></symbol>
<symbol id="swirl" viewBox="0 0 20 20"><g fill="none" stroke-linecap="round"><path d="M10 10 Q5.4 8.6 5.6 3.4 Q6.2 1.2 8.6 .8 M10 10 Q11.4 5.4 16.6 5.6 Q18.8 6.2 19.2 8.6 M10 10 Q14.6 11.4 14.4 16.6 Q13.8 18.8 11.4 19.2 M10 10 Q8.6 14.6 3.4 14.4 Q1.2 13.8 .8 11.4" stroke="var(--s1,#1a62d8)" stroke-width="2.2"/><path d="M10 10 Q8.2 5.6 11.6 2.4 Q13.2 1.4 14.8 1.8 M10 10 Q14.4 8.2 17.6 11.6 Q18.6 13.2 18.2 14.8 M10 10 Q11.8 14.4 8.4 17.6 Q6.8 18.6 5.2 18.2 M10 10 Q5.6 11.8 2.4 8.4 Q1.4 6.8 1.8 5.2" stroke="var(--s2,#3b8cf4)" stroke-width="1.5"/></g><circle cx="10" cy="10" r="3.4" fill="var(--s2,#3b8cf4)"/><circle cx="10" cy="10" r="2.3" fill="var(--s3,#e4efff)"/></symbol>
<symbol id="plane" viewBox="0 0 21 18"><path d="M.6 9.4 L20.4 .6 L16.6 15.4 L10.4 11.6 L7.4 16.6 L6.4 11 Z" fill="#dedede"/><path d="M6.4 11 L17 3.6 L8.6 11.6 L7.4 16.6 Z" fill="#b4b4b4"/></symbol>
<symbol id="chip" viewBox="0 0 17 17"><path d="M3 1 H5 V2.6 H7 V1 H9.6 V2.6 H11.6 V1 H15.6 V15.6 H3 V12.6 H1.6 V10.4 H3 V8.6 H1.6 V6.4 H3 Z" fill="none" stroke="#ece4d4" stroke-width="1.5"/><rect x="5.6" y="11.2" width="8" height="2" fill="#ece4d4"/></symbol>
<symbol id="bsq" viewBox="0 0 20 20"><rect x="0" y="0" width="20" height="20" rx="3.4" fill="#6fb2ee"/><rect x="0" y="0" width="20" height="10" rx="3.4" fill="#8cc4f6"/><path d="M14.2 12 A4.4 4.4 0 1 1 10 7.6" fill="none" stroke="#fff" stroke-width="1.7"/><path d="M4.6 8 Q5.4 4.6 8.6 3.8 M3.8 11 Q4 6 8 4.8" fill="none" stroke="#cfe6fb" stroke-width=".9"/></symbol>
<symbol id="gcirc" viewBox="0 0 22 22"><circle cx="11" cy="11" r="9.4" fill="#fff" stroke="#2a9ae2" stroke-width="2.6"/><path d="M3.2 16.4 A9.4 9.4 0 0 1 18.4 5.2" fill="none" stroke="#1fae4e" stroke-width="2.6"/><path d="M7 6 L11.8 9.6 L7 12.8 L8.6 9.6 Z" fill="#2a9ae2"/><path d="M15.4 9.4 L10.6 13 L15.4 16.4 L13.8 13 Z" fill="#1fae4e"/></symbol>
<symbol id="bt" viewBox="0 0 16 22"><ellipse cx="8" cy="11" rx="7.8" ry="11" fill="#d8d8d8"/><path d="M4 6.8 L12 14.6 L8 18.2 V3.8 L12 7.4 L4 15.2" fill="none" stroke="#333" stroke-width="1.3"/></symbol>
<symbol id="gsheet" viewBox="0 0 14 15"><rect x="0" y="0" width="14" height="15" rx="2.6" fill="#2db82d"/><rect x="0" y="0" width="14" height="7" rx="2.6" fill="#3fcc3f"/><rect x="2.4" y="4" width="9.4" height="7.4" fill="none" stroke="#fff" stroke-width="1"/><path d="M5.4 4 V11.4 M8.6 4 V11.4 M2.4 7.6 H11.8" stroke="#fff" stroke-width=".9"/></symbol>
<symbol id="spr" viewBox="0 0 16 14"><rect x="0" y="0" width="16" height="8" fill="#2f56c8"/><rect x="0" y="7" width="16" height="7" fill="#e8a020"/><path d="M0 14 L5 7 L8 11 L11 7 L16 14 Z" fill="#d0402c"/><path d="M0 10 L3 7 L3 14 L0 14Z M16 10 L13 7 V14 H16Z" fill="#f4d020"/><rect x="3" y="1.4" width="10" height="6.6" fill="#c8d8ec"/><path d="M8 3 V9 M5.4 5 H10.6" stroke="#2f7fd8" stroke-width="1.8"/><circle cx="8" cy="3.2" r="1.3" fill="#36a0e8"/><rect x="5" y="9" width="6" height="2" fill="#7a3fa0"/></symbol>
</defs></svg>
<svg style="left:4px;top:1052px;" width="24" height="24" viewBox="0 0 24 24"><circle cx="12" cy="12" r="11" fill="none" stroke="#e8e8e8" stroke-width="1.9"/><path d="M5.4 5.2 V13.2 Q5.4 17.6 9.8 17.6 H14.6 Q19 17.6 19 13.2 V10.4 Q19 8 16.7 8 Q14.4 8 14.4 10.4 V13.8 M14.4 10.4 Q14.4 8 12.1 8 Q9.8 8 9.8 10.4 V13.8" fill="none" stroke="#e8e8e8" stroke-width="1.8"/></svg>
<div style="left:38px;top:1054.5px;width:20px;height:18.5px;background:#f7c56e;border-radius:1px;"></div>
<div style="left:38px;top:1070.5px;width:20px;height:2.5px;background:#e3ac56;"></div>
<div style="left:67.3px;top:1053px;width:1.9px;height:23px;background:#8c8c8c;"></div>
<svg style="left:78px;top:1053.5px;" width="20.5" height="21" viewBox="0 0 20.5 21"><rect x="0" y="0" width="20.5" height="21" rx="3.4" fill="#f4733c"/><path d="M10.2 3.8 Q12.2 2.6 12.8 1.2 Q14.4 3 14.2 4.6 Q17.6 7.2 17.2 11.6 Q16.4 17.6 10.4 18 Q4 18 3.2 11.8 Q3 8.4 4.8 6.2 Q5 7.6 5.8 8 Q6.2 4.8 10.2 3.8Z" fill="#fff"/><path d="M10.6 8 Q13 8 13.4 10.6 Q13.4 13.4 10.6 13.6 Q8.4 13.6 7.6 11.8 Q9 12.4 10 11.6 Q8.4 10.8 8.8 9.4 Q9.6 9.8 10.6 9.4 Q10 8.6 10.6 8Z" fill="#f4733c"/></svg>
<svg style="left:109.5px;top:1053px;" width="21.5" height="22" viewBox="0 0 21.5 22"><rect x=".6" y=".6" width="20.3" height="20.8" rx="3.4" fill="#1f1f1f" stroke="#0e0e0e" stroke-width="1.2"/></svg>
<span class="t" style="left:112.2px;top:1057.01px;font:700 6.4px 'Liberation Sans',sans-serif;color:#f0f0f0;">$</span>
<div style="left:116.6px;top:1062px;width:4.4px;height:1.2px;background:#f0f0f0;"></div>
<svg style="left:142px;top:1055px;" width="20.5" height="18" viewBox="0 0 20.5 18"><path d="M0 1.4 Q0 .4 1 .4 H7 L9 2.6 H19.4 Q20.4 2.6 20.4 3.6 V17 Q20.4 18 19.4 18 H1 Q0 18 0 17Z" fill="#e8b45c"/><rect x="1.8" y="4" width="16.8" height="3" fill="#f4f4f4"/><path d="M0 6 H20.4 V17 Q20.4 18 19.4 18 H1 Q0 18 0 17Z" fill="#f7c56e"/></svg>
<svg style="left:171px;top:1056px;" width="16.5" height="16" viewBox="0 0 16.5 16"><circle cx="8.2" cy="8" r="8" fill="#1f7fd6"/><path d="M.4 7 Q1.6 .2 8.4 0 Q15.6 .4 16.4 7 Q16 10 12.6 10 H9.4 Q10.8 8.6 10.2 6.8 Q8.6 4.6 5.8 5.4 Q2.2 6.4 .4 9.6Z" fill="#3fcf6a"/><path d="M.4 7 Q1.4 1.4 7 .2 Q3 2.8 3.4 8 Q4 13 9 14 Q12 14.4 14.4 12.8 Q11.8 16.4 7.4 16 Q1 15 .4 7Z" fill="#1557b0"/><path d="M5.8 5.4 Q8.6 4.6 10.2 6.8 Q10.8 8.6 9.4 10 H12.6 Q16 10 16.4 7 Q15.6 2.4 11 1.6 Q6 1.6 5.8 5.4Z" fill="#36b8d8" opacity=".55"/></svg>
<span class="t" style="left:196.3px;top:1056.94px;font:400 13.33px 'Liberation Sans',sans-serif;color:#d6dbe6;letter-spacing:-0.512px;">U...</span>
<svg style="left:222.5px;top:1056px;--c:#a4451f;--f:#9a9a9a;" width="14" height="16"><use href="#brave" width="14" height="16"/></svg>
<span class="t" style="left:246.5px;top:1056.94px;font:400 13.33px 'Liberation Sans',sans-serif;color:#d6dbe6;letter-spacing:-0.41px;">F...</span>
<svg style="left:272.5px;top:1056px;" width="14" height="16"><use href="#brave" width="14" height="16"/></svg>
<span class="t" style="left:296.4px;top:1056.94px;font:400 13.33px 'Liberation Sans',sans-serif;color:#d6dbe6;letter-spacing:-0.379px;">(...</span>
<svg style="left:322.3px;top:1056px;" width="14" height="16"><use href="#brave" width="14" height="16"/></svg>
<span class="t" style="left:346px;top:1056.94px;font:400 13.33px 'Liberation Sans',sans-serif;color:#d6dbe6;letter-spacing:-0.742px;">S...</span>
<svg style="left:372.3px;top:1056px;" width="14" height="16"><use href="#brave" width="14" height="16"/></svg>
<span class="t" style="left:396.6px;top:1056.94px;font:400 13.33px 'Liberation Sans',sans-serif;color:#d6dbe6;letter-spacing:-0.422px;">...</span>
<svg style="left:421px;top:1055.5px;--s1:#1a4482;--s2:#24589e;--s3:#8090a6;" width="16" height="16"><use href="#swirl" width="16" height="16"/></svg>
<span class="t" style="left:446.2px;top:1056.94px;font:400 13.33px 'Liberation Sans',sans-serif;color:#d6dbe6;letter-spacing:-0.605px;">C...</span>
<svg style="left:472px;top:1056.5px;" width="14" height="14.5"><use href="#gsheet" width="14" height="14.5"/></svg>
<span class="t" style="left:496.8px;top:1056.94px;font:400 13.33px 'Liberation Sans',sans-serif;color:#d6dbe6;letter-spacing:-0.387px;">P...</span>
<svg style="left:522px;top:1056.5px;" width="14" height="14.5"><use href="#gsheet" width="14" height="14.5"/></svg>
<span class="t" style="left:546.2px;top:1056.94px;font:400 13.33px 'Liberation Sans',sans-serif;color:#d6dbe6;letter-spacing:-0.41px;">F...</span>
<svg style="left:571.2px;top:1056px;" width="15.5" height="15.5" viewBox="0 0 15.5 15.5"><rect x=".5" y=".5" width="14.5" height="14.5" rx="2" fill="#2b382b" stroke="#3c3c3c" stroke-width="1"/><path d="M2.4 9 H4.4 L5.2 4.4 L6.2 11.6 L7 8 H12.8" fill="none" stroke="#3fa64a" stroke-width=".9"/></svg>
<span class="t" style="left:596.5px;top:1056.94px;font:400 13.33px 'Liberation Sans',sans-serif;color:#7aa6ea;letter-spacing:-0.422px;">...</span>
<svg style="left:621px;top:1056px;" width="16" height="16" viewBox="0 0 16 16"><rect x="0" y="0" width="16" height="16" fill="#fff"/><path d="M2.4 3.4 Q5.6 1.6 8.8 3.4 V10.4 Q5.6 12.4 2.4 10.4Z" fill="#b8349a"/><path d="M2.4 5.6 Q5.6 7.4 8.8 5.6 M2.4 8 Q5.6 9.8 8.8 8" stroke="#fff" stroke-width=".8" fill="none"/><path d="M13.6 2.6 L10.4 9.6 M10.4 6.4 L13.4 10.6 L15.2 12.6" stroke="#b8349a" stroke-width="1.2" fill="none"/><path d="M5.6 11.4 Q9 9.6 11.6 12.4 Q10 14.8 7 14.2Z" fill="#e0a6d2"/></svg>
<span class="t" style="left:646.8px;top:1056.94px;font:400 13.33px 'Liberation Sans',sans-serif;color:#d6dbe6;letter-spacing:-0.422px;">...</span>
<svg style="left:672px;top:1057px;" width="14" height="14" viewBox="0 0 14 14"><circle cx="7" cy="7" r="6.8" fill="#9c9c9c"/><circle cx="7" cy="7" r="4.6" fill="none" stroke="#3f9a66" stroke-width="1"/><path d="M4.6 5 L7.6 6.8 L4.6 8.8Z" fill="#3a7fc0"/><path d="M9.6 6 L7 7.6 L9.6 9.4Z" fill="#3f9a66"/></svg>
<span class="t" style="left:696.8px;top:1056.94px;font:400 13.33px 'Liberation Sans',sans-serif;color:#d6dbe6;letter-spacing:-0.594px;">R...</span>
<svg style="left:723px;top:1057px;" width="14" height="14" viewBox="0 0 14 14"><circle cx="7" cy="7" r="6.8" fill="#fbfbfb"/><circle cx="7" cy="7" r="4.7" fill="none" stroke="#3b8fe0" stroke-width="1.1"/><path d="M2.8 9.2 A4.7 4.7 0 0 0 11.2 9.2" fill="none" stroke="#29b060" stroke-width="1.1"/><path d="M4.6 4.8 L7.6 6.6 L4.6 8.6Z" fill="#3b8fe0"/><path d="M9.8 6 L7 7.8 L9.8 9.6Z" fill="#29b060"/></svg>
<span class="t" style="left:747.7px;top:1056.94px;font:400 13.33px 'Liberation Sans',sans-serif;color:#d6dbe6;letter-spacing:-0.422px;">B...</span>
<svg style="left:773px;top:1056px;" width="16" height="16" viewBox="0 0 16 16"><circle cx="8" cy="8" r="8" fill="#f0761f"/><path d="M8 2 L11 4.4 L10.2 8.6 L8 10.4 L5.8 8.6 L5 4.4Z" fill="#f9b27c"/><path d="M8 2 V10.4 M5 4.4 L11 4.4 M5.8 8.6 H10.2 M8 10.4 L4 14 M8 10.4 L12 14 M2 5 L5 4.4 M14 5 L11 4.4" stroke="#fbd6b6" stroke-width=".6"/><circle cx="8" cy="8.6" r="1.1" fill="#fff"/></svg>
<span class="t" style="left:798.7px;top:1056.94px;font:400 13.33px 'Liberation Sans',sans-serif;color:#d6dbe6;letter-spacing:-0.387px;">P...</span>
<svg style="left:824px;top:1057px;" width="16" height="14"><use href="#spr" width="16" height="14"/></svg>
<span class="t" style="left:850px;top:1056.94px;font:400 13.33px 'Liberation Sans',sans-serif;color:#d6dbe6;letter-spacing:-0.379px;">(...</span>
<div style="left:872px;top:1048px;width:51px;height:32px;background:#1f9ede;"></div>
<svg style="left:875px;top:1057px;" width="16" height="14"><use href="#spr" width="16" height="14"/></svg>
<span class="t" style="left:900.5px;top:1056.94px;font:400 13.33px 'Liberation Sans',sans-serif;color:#ffffff;letter-spacing:-0.539px;">s...</span>
<svg style="left:926.6px;top:1056.5px;" width="15" height="15" viewBox="0 0 15 15"><rect x="0" y="0" width="15" height="15" rx="2.2" fill="#2a9fd9" stroke="#1c7fb4" stroke-width=".8"/><path d="M1.6 7.4 L13.4 2.4 L11.4 12.4 L7.8 9.8 L6 11.8 L5.6 8.8Z" fill="#fff"/><path d="M5.6 8.8 L11.4 4.4 L7 9.2 L6 11.8Z" fill="#c8dcec"/></svg>
<span class="t" style="left:951.8px;top:1056.94px;font:400 13.33px 'Liberation Sans',sans-serif;color:#d6dbe6;letter-spacing:-0.422px;">...</span>
<svg style="left:977.8px;top:1057.8px;" width="14.5" height="12.4" viewBox="0 0 14.5 12.4"><path d="M0 1 Q0 0 1 0 H5 L6.6 1.8 H13.5 Q14.5 1.8 14.5 2.8 V11.4 Q14.5 12.4 13.5 12.4 H1 Q0 12.4 0 11.4Z" fill="#f7c56e"/></svg>
<span class="t" style="left:1002.4px;top:1056.94px;font:400 13.33px 'Liberation Sans',sans-serif;color:#d6dbe6;letter-spacing:-0.379px;">(...</span>
<svg style="left:1028.7px;top:1057px;" width="14.5" height="14" viewBox="0 0 14.5 14"><rect x=".5" y=".5" width="13.5" height="13" rx="1.6" fill="#46557c" stroke="#37456a" stroke-width="1"/><rect x="2.4" y="3.2" width="9.6" height="7.4" fill="#8e8e8e"/><path d="M2.4 3.2 L7.2 7.4 L12 3.2 M2.4 10.6 L6 6.6 M12 10.6 L8.4 6.6" stroke="#6c6c6c" stroke-width=".7" fill="none"/></svg>
<span class="t" style="left:1053.7px;top:1056.94px;font:400 13.33px 'Liberation Sans',sans-serif;color:#d6dbe6;letter-spacing:-0.387px;">P...</span>
<svg style="left:1080.5px;top:1056px;" width="14.5" height="15.5"><use href="#torn" width="14.5" height="15.5"/></svg>
<span class="t" style="left:1104.6px;top:1056.94px;font:400 13.33px 'Liberation Sans',sans-serif;color:#d6dbe6;letter-spacing:-0.422px;">...</span>
<svg style="left:1131px;top:1056px;" width="14.5" height="15.5"><use href="#torn" width="14.5" height="15.5"/></svg>
<span class="t" style="left:1155.7px;top:1056.94px;font:400 13.33px 'Liberation Sans',sans-serif;color:#d6dbe6;letter-spacing:-0.406px;">O...</span>
<svg style="left:1182px;top:1056px;" width="14.5" height="15.5"><use href="#torn" width="14.5" height="15.5"/></svg>
<span class="t" style="left:1205.8px;top:1056.94px;font:400 13.33px 'Liberation Sans',sans-serif;color:#d6dbe6;letter-spacing:-0.742px;">S...</span>
<svg style="left:1233px;top:1056px;" width="14.5" height="15.5"><use href="#torn" width="14.5" height="15.5"/></svg>
<span class="t" style="left:1257px;top:1056.94px;font:400 13.33px 'Liberation Sans',sans-serif;color:#d6dbe6;letter-spacing:-0.348px;">T...</span>
<svg style="left:1284px;top:1057px;" width="14" height="14" viewBox="0 0 14 14"><rect x="0" y="0" width="14" height="14" rx="2" fill="#5e5c8c"/><path d="M3 4 H11 M3 6.4 H11 M3 8.8 H9" stroke="#6e6c9c" stroke-width=".9"/></svg>
<span class="t" style="left:1308.2px;top:1056.94px;font:400 13.33px 'Liberation Sans',sans-serif;color:#d6dbe6;letter-spacing:-0.031px;">*...</span>
<svg style="left:1333.8px;top:1056.5px;" width="16" height="15" viewBox="0 0 16 15"><rect x=".6" y=".6" width="14.8" height="13.8" rx="2.4" fill="#232323" stroke="#3a3a3a" stroke-width="1"/><path d="M5 5.2 H7.6" stroke="#9a9a9a" stroke-width=".9"/></svg>
<span class="t" style="left:1336.7px;top:1058.84px;font:700 4.6px 'Liberation Sans',sans-serif;color:#9a9a9a;">$</span>
<span class="t" style="left:1360px;top:1056.94px;font:400 13.33px 'Liberation Sans',sans-serif;color:#d6dbe6;letter-spacing:-0.348px;">T...</span>
<span class="t" style="left:1393px;top:1055.26px;font:700 15.4px 'Liberation Sans',sans-serif;color:#4a9fe0;transform:scaleX(.76);transform-origin:0 0;-webkit-text-stroke:.7px #4a9fe0;">HR</span>
<svg style="left:1413.8px;top:1053px;" width="20.5" height="21"><use href="#swirl" width="20.5" height="21"/></svg>
<svg style="left:1435.6px;top:1054.4px;" width="20.5" height="17.4"><use href="#plane" width="20.5" height="17.4"/></svg>
<svg style="left:1437.3px;top:1067.4px;" width="6.2" height="6.2" viewBox="0 0 6.2 6.2"><circle cx="3.1" cy="3.1" r="3.1" fill="#f03a3a"/></svg>
<svg style="left:1459.6px;top:1055.6px;" width="16.6" height="16.6"><use href="#chip" width="16.6" height="16.6"/></svg>
<svg style="left:1480.2px;top:1053.8px;" width="19.6" height="20.2"><use href="#bsq" width="19.6" height="20.2"/></svg>
<svg style="left:1501.6px;top:1052.6px;" width="21.4" height="21.6"><use href="#gcirc" width="21.4" height="21.6"/></svg>
<svg style="left:1527px;top:1052.7px;" width="15.6" height="22"><use href="#bt" width="15.6" height="22"/></svg>
<svg style="left:1551.6px;top:1053px;" width="19.2" height="22" viewBox="0 0 19.2 22"><path d="M9.6 .6 Q11.2 .6 11.4 2.2 Q15.6 3.4 15.8 8.6 Q15.8 13.4 18.8 16.4 V17.4 H.4 V16.4 Q3.4 13.4 3.4 8.6 Q3.6 3.4 7.8 2.2 Q8 .6 9.6 .6Z" fill="#dcdcdc"/><path d="M6.8 19 H12.4 Q12 21.6 9.6 21.6 Q7.2 21.6 6.8 19Z" fill="#dcdcdc"/></svg>
<svg style="left:1582px;top:1052px;" width="24.5" height="24" viewBox="0 0 24.5 24"><path d="M12 1.6 L21.6 5 Q22 15.4 12 22 Q2 15.4 2.4 5Z" fill="none" stroke="#dcdcdc" stroke-width="2.4"/><path d="M12 5.4 L18.4 7.6 Q18.6 14 12 18.8Z" fill="#8a8a8a"/><path d="M12 5.4 L5.6 7.6 Q5.4 14 12 18.8Z" fill="#5a5a5a"/><circle cx="19.4" cy="19.4" r="4.6" fill="#f07a2a"/></svg>
<svg style="left:1615.6px;top:1053.8px;" width="21.4" height="20.6" viewBox="0 0 21.4 20.6"><rect x="1.6" y="1.6" width="18.2" height="17.4" rx="3.4" fill="none" stroke="#dcdcdc" stroke-width="3"/><path d="M5.6 19 V13.6 H7.4 V11.4 H14 V13.6 H15.8 V19" fill="#383838" stroke="#dcdcdc" stroke-width="1.6"/></svg>
<svg style="left:1649.8px;top:1052px;" width="21" height="24.4" viewBox="0 0 21 24.4"><path d="M5.4 3.4 V1.4 H13.4 V3.4 H17 V12 M12 22.6 H1.6 V3.4 H5.4" fill="none" stroke="#dcdcdc" stroke-width="2.8"/><path d="M6.4 11 V6.4 H8.4 V4.6 H10.4 V6.4 H12.4 V11 L9.4 14 Z" fill="#dcdcdc"/><path d="M15.6 11.4 L11.6 18.2 H15 L13.6 23.6 L20.6 15.4 H16.8 L19 11.4Z" fill="#8c8c8c"/></svg>
<svg style="left:1678.6px;top:1053px;" width="23" height="21.8" viewBox="0 0 23 21.8"><path d="M.4 7.4 H4.4 L10.4 1.4 V20.4 L4.4 14.4 H.4Z" fill="#dcdcdc"/><path d="M13 6.6 Q15.4 10.9 13 15.2" fill="none" stroke="#dcdcdc" stroke-width="2.2"/><path d="M16.2 3.4 Q20.4 10.9 16.2 18.4" fill="none" stroke="#b4b4b4" stroke-width="2.2"/><path d="M19.6 .8 Q25 10.9 19.6 21" fill="none" stroke="#6e6e6e" stroke-width="2"/></svg>
<span class="t dj" style="left:1724.6px;top:1050.3px;font-size:10px;font-weight:700;color:#ece6da;letter-spacing:-.1px">18:47</span>
<span class="t dj" style="left:1708.3px;top:1064.8px;font-size:10.7px;color:#ece6da;">2026-02-24</span>
<svg style="left:1777.8px;top:1053px;" width="20.5" height="21"><use href="#swirl" width="20.5" height="21"/></svg>
<svg style="left:1801px;top:1054.4px;" width="21" height="17.4"><use href="#plane" width="21" height="17.4"/></svg>
<svg style="left:1803.2px;top:1067.6px;" width="6.2" height="6.2" viewBox="0 0 6.2 6.2"><circle cx="3.1" cy="3.1" r="3.1" fill="#f03a3a"/></svg>
<svg style="left:1826px;top:1053.8px;" width="20" height="20.2"><use href="#bsq" width="20" height="20.2"/></svg>
<svg style="left:1848.8px;top:1052.6px;" width="22" height="21.6"><use href="#gcirc" width="22" height="21.6"/></svg>
<svg style="left:1877px;top:1052.7px;" width="15.6" height="22"><use href="#bt" width="15.6" height="22"/></svg>
<svg style="left:1900.2px;top:1055.6px;" width="16.4" height="16.6"><use href="#chip" width="16.4" height="16.6"/></svg>
</body></html>
